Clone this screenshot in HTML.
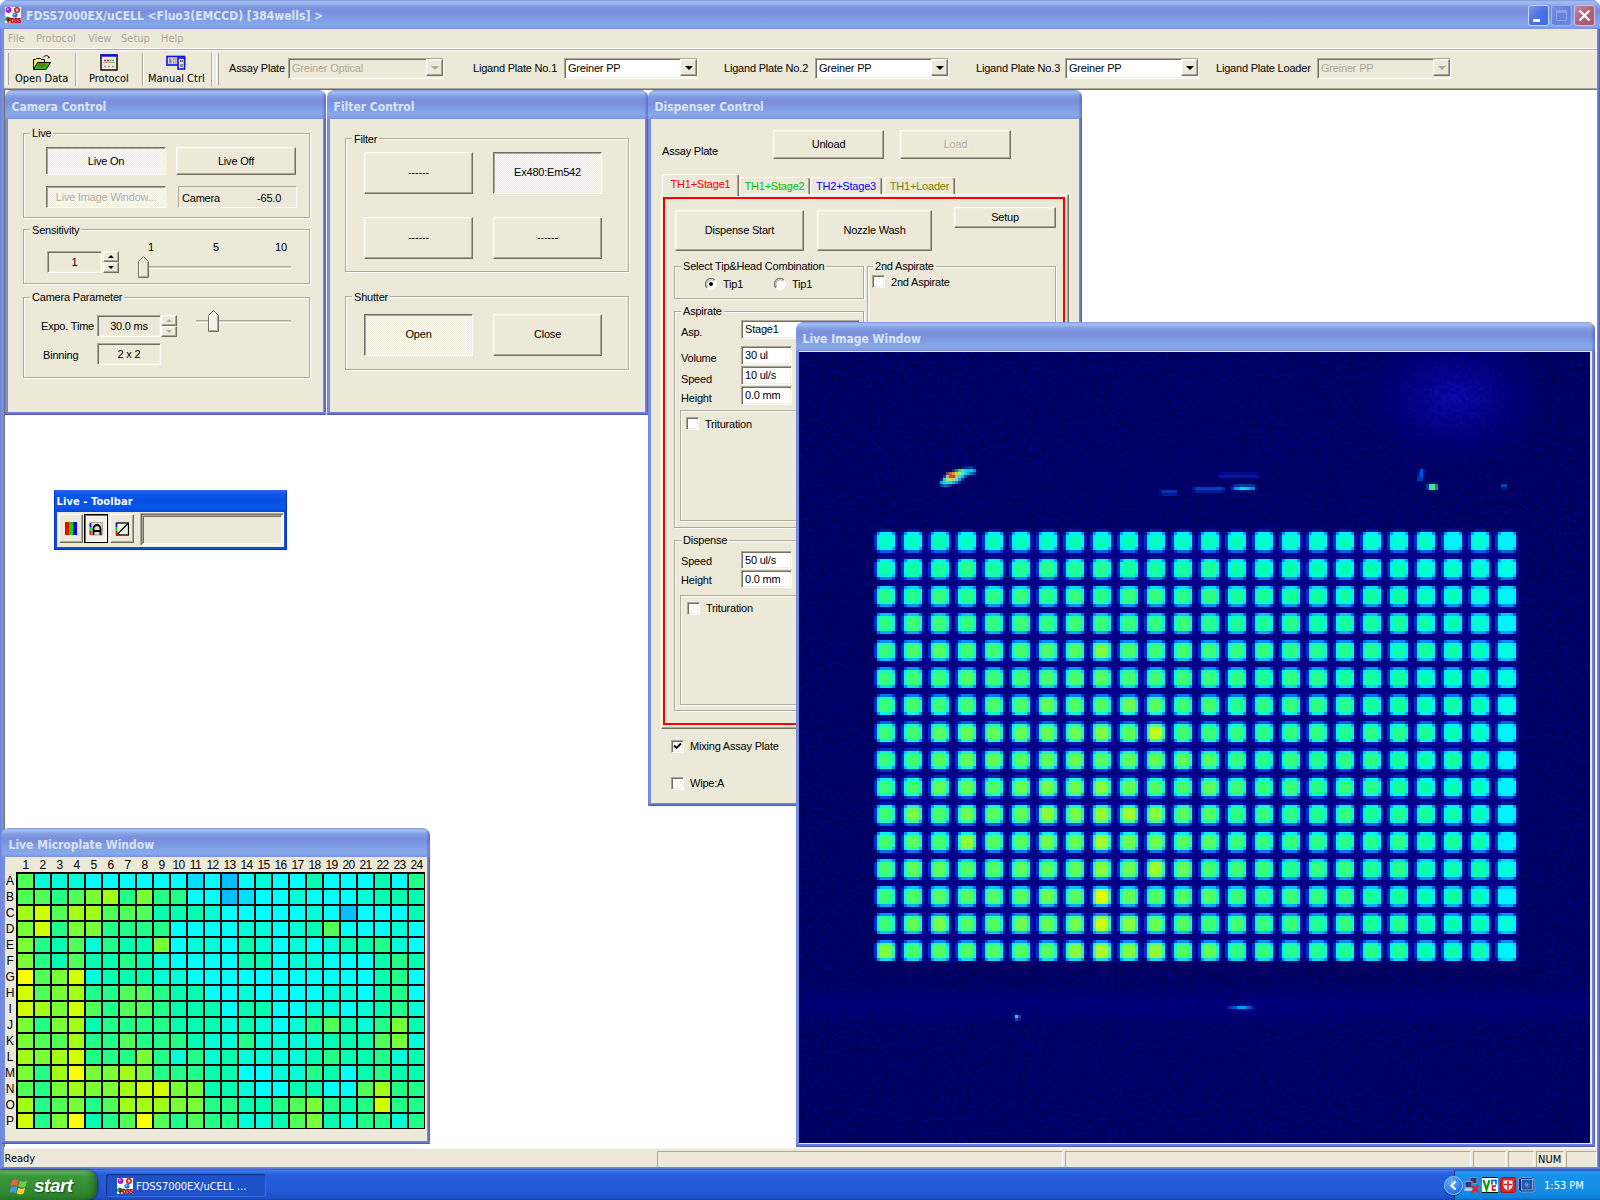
<!DOCTYPE html>
<html><head><meta charset="utf-8"><title>FDSS7000EX/uCELL</title>
<style>
*{box-sizing:border-box;margin:0;padding:0}
html,body{width:1600px;height:1200px;overflow:hidden;background:#fff}
body{position:relative;font-family:"Liberation Sans",sans-serif;font-size:11px;color:#000;letter-spacing:-0.2px}
.a{position:absolute}
.t{position:absolute;white-space:nowrap;line-height:13px;height:13px}
.tah{font-family:"DejaVu Sans Condensed","DejaVu Sans","Liberation Sans",sans-serif;font-size:11px;letter-spacing:0}
.cap{font-family:"DejaVu Sans Condensed","DejaVu Sans","Liberation Sans",sans-serif;font-weight:bold;font-size:12px;letter-spacing:0;color:#dbe4f7;position:absolute;white-space:nowrap;line-height:16px}
.face{background:#ece9d8}
/* classic raised button */
.btn{position:absolute;background:#ece9d8;border:1px solid;border-color:#fff #716f64 #716f64 #fff;box-shadow:inset -1px -1px 0 #aca899,inset 1px 1px 0 #f1efe2;text-align:center;white-space:nowrap}
.btn.dn{border-color:#716f64 #fff #fff #716f64;box-shadow:inset 1px 1px 0 #aca899,inset -1px -1px 0 #f1efe2;background:#ece9d8 conic-gradient(#fff 25%,#ece9d8 0 50%,#fff 0 75%,#ece9d8 0) 0 0/2px 2px}
.btn.dis{color:#aca899;text-shadow:1px 1px 0 #fff}
.sunk{position:absolute;border:1px solid;border-color:#aca899 #fff #fff #aca899;box-shadow:inset 1px 1px 0 #716f64,inset -1px -1px 0 #f1efe2;background:#fff;white-space:nowrap}
.sunk.f{background:#ece9d8}
.sunk1{position:absolute;border:1px solid;border-color:#aca899 #fff #fff #aca899;white-space:nowrap}
.grp{position:absolute;border:1px solid #aca899;box-shadow:1px 1px 0 #fff,inset 1px 1px 0 #fff}
.gl{position:absolute;background:#ece9d8;padding:0 2px;white-space:nowrap;line-height:13px;height:13px;margin-top:1px}
/* child window */
.win{position:absolute;background:#ece9d8;border-radius:7px 7px 0 0}
.win .tb{position:absolute;left:0;top:0;right:0;height:29px;border-radius:7px 7px 0 0;overflow:hidden;
 background:linear-gradient(180deg,#6c8ae2 0,#9db7ec 1px,#a1b9ed 3px,#839fe3 6px,#7a90dd 10px,#7b91de 14px,#80a0e5 20px,#86aaea 25px,#819fe6 27px,#7a92df 29px)}
.win .bl{position:absolute;left:0;top:29px;bottom:0;width:3px;background:linear-gradient(90deg,#6a80da,#7991e0 50%,#7288dc)}
.win .br{position:absolute;right:0;top:29px;bottom:0;width:3px;background:linear-gradient(90deg,#7c90e0,#6a78d4 50%,#4a50ba)}
.win .bb{position:absolute;left:0;right:0;bottom:0;height:3px;background:linear-gradient(180deg,#7588de,#6474d2 50%,#4a4fb8)}
.win .tb::after{content:'';position:absolute;right:0;top:3px;bottom:0;width:4px;background:linear-gradient(90deg,rgba(90,80,200,0),rgba(80,70,195,.55))}
</style></head><body>
<!-- main frame -->
<div class="a" id="frame" style="left:0;top:0;width:1600px;height:1170px;background:#7b93e0;border-radius:8px 8px 0 0"></div>
<div class="a" id="mtitle" style="left:0;top:0;width:1600px;height:29px;border-radius:8px 8px 0 0;background:linear-gradient(180deg,#6c8ae2 0,#9db7ec 1px,#a1b9ed 3px,#839fe3 6px,#7a90dd 10px,#7b91de 14px,#80a0e5 20px,#86aaea 25px,#819fe6 27px,#7a92df 29px)"></div>
<div class="a" style="left:0;top:29px;width:4px;height:1141px;background:linear-gradient(90deg,#6a80da,#7c94e2 50%,#7389dd)"></div>
<div class="a" style="left:1597px;top:29px;width:3px;height:1141px;background:linear-gradient(90deg,#7c90e0,#6a78d4 50%,#4a50ba)"></div>
<!-- app icon -->
<svg class="a" style="left:5px;top:7px" width="16" height="16" viewBox="0 0 16 16">
<rect width="16" height="16" fill="#fff"/>
<circle cx="3.5" cy="3" r="3" fill="#a020d0"/><circle cx="2.8" cy="2.2" r="1" fill="#e0a0ff"/>
<circle cx="12" cy="3" r="3" fill="#e01010"/><path d="M10.5 3h3M12 1.5v3" stroke="#fff" stroke-width="1.2"/>
<circle cx="10" cy="8" r="2.6" fill="#2080d0"/><circle cx="9.4" cy="7.3" r="0.9" fill="#a0d8ff"/>
<circle cx="2.5" cy="12" r="2.5" fill="#20b020"/>
<text x="2.500" y="15.800" font-family="Liberation Sans,sans-serif" font-weight="bold" font-size="7" textLength="13.500" lengthAdjust="spacingAndGlyphs" fill="#e00000" stroke="#900000" stroke-width="0.600">FDSS</text>
</svg>
<div class="cap" style="left:26px;top:8px;">FDSS7000EX/uCELL &lt;Fluo3(EMCCD) [384wells] &gt;</div>
<!-- caption buttons -->
<div class="a" style="left:1528px;top:5px;width:21px;height:21px;border-radius:3px;border:1px solid #c8d4f4;background:linear-gradient(135deg,#7a94ea 0,#4a70e4 50%,#3e6ee6 100%)"><div class="a" style="left:4px;top:13px;width:7px;height:3px;background:#fff"></div></div>
<div class="a" style="left:1551px;top:5px;width:21px;height:21px;border-radius:3px;border:1px solid #9bb0ec;background:linear-gradient(135deg,#7a8ee2 0,#6682de 50%,#6488e2 100%)"><div class="a" style="left:4px;top:4px;width:11px;height:11px;border:1px solid #909ee6;border-top-width:3px"></div></div>
<div class="a" style="left:1574px;top:5px;width:21px;height:21px;border-radius:3px;border:1px solid #d8c0d8;background:linear-gradient(135deg,#c088a8 0,#b46078 50%,#a85870 100%)">
<svg class="a" style="left:0;top:0" width="19" height="19" viewBox="0 0 19 19"><path d="M4.5 4.5l10 10M14.5 4.5l-10 10" stroke="#fff" stroke-width="2.2"/></svg></div>
<!-- menu -->
<div class="a face" style="left:4px;top:29px;width:1593px;height:19px"></div>
<div class="t tah" style="left:8px;top:32px;color:#aca899">File</div>
<div class="t tah" style="left:36px;top:32px;color:#aca899">Protocol</div>
<div class="t tah" style="left:88px;top:32px;color:#aca899">View</div>
<div class="t tah" style="left:121px;top:32px;color:#aca899">Setup</div>
<div class="t tah" style="left:161px;top:32px;color:#aca899">Help</div>
<div class="a" style="left:4px;top:48px;width:1593px;height:3px;background:linear-gradient(180deg,#fff 0,#fff 1px,#aca899 1px,#aca899 2px,#fff 2px)"></div>
<!-- toolbar -->
<div class="a face" style="left:4px;top:51px;width:1593px;height:37px"></div>
<div class="a" style="left:4px;top:88px;width:1593px;height:2px;background:linear-gradient(180deg,#aca899 0,#aca899 1px,#716f64 1px)"></div>
<!-- mdi client -->
<div class="a" style="left:4px;top:90px;width:1593px;height:1058px;background:#fff;border-left:1px solid #716f64"></div>
<!-- toolbar content -->
<div class="a" style="left:6px;top:53px;width:3px;height:32px;border-left:1px solid #fff;border-right:1px solid #aca899"></div>
<div class="a" style="left:75px;top:53px;width:2px;height:33px;border-left:1px solid #aca899;border-right:1px solid #fff"></div>
<div class="a" style="left:142px;top:53px;width:2px;height:33px;border-left:1px solid #aca899;border-right:1px solid #fff"></div>
<div class="a" style="left:211px;top:52px;width:2px;height:35px;border-left:1px solid #aca899;border-right:1px solid #fff"></div>
<div class="a" style="left:216px;top:53px;width:3px;height:32px;border-left:1px solid #fff;border-right:1px solid #aca899"></div>
<!-- open data icon -->
<svg class="a" style="left:32px;top:54px" width="20" height="17" viewBox="0 0 20 17">
<path d="M1.5 15.5V5.5h2l1-1h4l1 1h3v3" fill="#f0f060" stroke="#000"/>
<path d="M1.5 15.5l4-7h13l-4.500 7z" fill="#20c020" stroke="#000"/>
<path d="M6 13l2-3 2 3 2-3 2 2" stroke="#806010" stroke-width="1.6" fill="none"/>
<path d="M11 3.500c2-2.500 5-2.500 6 0" stroke="#000" fill="none"/><path d="M15.500 4.500l2-0.500-0.300-2z" fill="#000"/>
</svg>
<!-- protocol icon -->
<svg class="a" style="left:100px;top:54px" width="18" height="17" viewBox="0 0 18 17">
<rect x="1" y="1" width="16" height="15" fill="#ece9d8" stroke="#000" stroke-width="1.4"/>
<rect x="0.300" y="0.300" width="17.400" height="2.400" fill="#1010f0"/>
<path d="M4 6.500h2" stroke="#e020e0" stroke-width="1.400"/><path d="M7 6.500h2" stroke="#e02020" stroke-width="1.400"/><path d="M9.500 6.500h2" stroke="#20c020" stroke-width="1.400"/><path d="M12 6.500h2" stroke="#20c0e0" stroke-width="1.400"/>
<path d="M3 8.500h12" stroke="#aca899"/><path d="M4 12.500h2M8 12.500h2M12 12.500h2" stroke="#9a978a" stroke-width="1.600"/>
</svg>
<!-- manual ctrl icon -->
<svg class="a" style="left:166px;top:55px" width="20" height="15" viewBox="0 0 20 15">
<rect x="1" y="1.500" width="17.500" height="8.500" fill="#d8dcf0" stroke="#1010f0" stroke-width="1.600"/>
<rect x="12" y="3" width="6.500" height="11" fill="#e8e8f0" stroke="#1010f0" stroke-width="1.600"/>
<rect x="3" y="3.500" width="2.500" height="5" fill="#908c80"/><rect x="7" y="3.500" width="3.500" height="5" fill="#908c80"/>
<path d="M7 6h4M8.800 3.500v5" stroke="#ece9d8" stroke-width="0.800"/>
<rect x="14" y="5" width="1.500" height="2" fill="#e02020"/><rect x="15.500" y="5" width="1.500" height="2" fill="#20c020"/><rect x="14" y="9" width="3" height="3" fill="#908c80"/>
</svg>
<div class="t tah" style="left:15px;top:72px;">Open Data</div>
<div class="t tah" style="left:89px;top:72px;">Protocol</div>
<div class="t tah" style="left:148px;top:72px;">Manual Ctrl</div>
<!-- combos -->
<div class="t" style="left:229px;top:62px;">Assay Plate</div>
<div class="sunk f" style="left:288px;top:58px;width:156px;height:21px"><div class="t" style="left:3px;top:3px;color:#aca899">Greiner Optical</div>
 <div class="btn" style="right:0;top:0;width:17px;height:17px"></div><div class="a" style="right:4.500px;top:7px;width:0;height:0;border:4px solid transparent;border-top:4px solid #aca899;border-bottom:0"></div></div>
<div class="t" style="left:473px;top:62px;">Ligand Plate No.1</div>
<div class="sunk" style="left:564px;top:58px;width:134px;height:21px"><div class="t" style="left:3px;top:3px">Greiner PP</div>
 <div class="btn" style="right:0;top:0;width:17px;height:17px"></div><div class="a" style="right:4.500px;top:7px;width:0;height:0;border:4px solid transparent;border-top:4px solid #000;border-bottom:0"></div></div>
<div class="t" style="left:724px;top:62px;">Ligand Plate No.2</div>
<div class="sunk" style="left:815px;top:58px;width:134px;height:21px"><div class="t" style="left:3px;top:3px">Greiner PP</div>
 <div class="btn" style="right:0;top:0;width:17px;height:17px"></div><div class="a" style="right:4.500px;top:7px;width:0;height:0;border:4px solid transparent;border-top:4px solid #000;border-bottom:0"></div></div>
<div class="t" style="left:976px;top:62px;">Ligand Plate No.3</div>
<div class="sunk" style="left:1065px;top:58px;width:134px;height:21px"><div class="t" style="left:3px;top:3px">Greiner PP</div>
 <div class="btn" style="right:0;top:0;width:17px;height:17px"></div><div class="a" style="right:4.500px;top:7px;width:0;height:0;border:4px solid transparent;border-top:4px solid #000;border-bottom:0"></div></div>
<div class="t" style="left:1216px;top:62px;">Ligand Plate Loader</div>
<div class="sunk f" style="left:1317px;top:58px;width:134px;height:21px"><div class="t" style="left:3px;top:3px;color:#aca899">Greiner PP</div>
 <div class="btn" style="right:0;top:0;width:17px;height:17px"></div><div class="a" style="right:4.500px;top:7px;width:0;height:0;border:4px solid transparent;border-top:4px solid #aca899;border-bottom:0"></div></div>
<!-- Camera Control window -->
<div class="win" style="left:5px;top:90px;width:321px;height:325px">
<div class="tb"></div><div class="bl"></div><div class="br"></div><div class="bb"></div>
<div class="cap" style="left:6.500px;top:9px">Camera Control</div>
<!-- coords below are relative to window: sub 5, 90 -->
<div class="grp" style="left:18px;top:43px;width:287px;height:85px"></div><div class="gl" style="left:25px;top:36px">Live</div>
<div class="btn dn" style="left:41px;top:57px;width:120px;height:28px;line-height:26px">Live On</div>
<div class="btn" style="left:171px;top:57px;width:120px;height:28px;line-height:26px">Live Off</div>
<div class="btn dn dis" style="left:41px;top:96px;width:120px;height:22px;line-height:20px">Live Image Window...</div>
<div class="sunk1" style="left:173px;top:96px;width:119px;height:22px"><div class="t" style="left:3px;top:5px">Camera</div><div class="t" style="left:78px;top:5px">-65.0</div></div>
<div class="grp" style="left:18px;top:139px;width:287px;height:55px"></div><div class="gl" style="left:25px;top:133px">Sensitivity</div>
<div class="sunk f" style="left:42px;top:161px;width:55px;height:22px;text-align:center;line-height:21px">1</div>
<div class="btn" style="left:98px;top:161px;width:16px;height:11px"><div class="a" style="left:4px;top:3px;border:3px solid transparent;border-bottom:3px solid #000;border-top:0"></div></div>
<div class="btn" style="left:98px;top:172px;width:16px;height:11px"><div class="a" style="left:4px;top:3px;border:3px solid transparent;border-top:3px solid #000;border-bottom:0"></div></div>
<div class="t" style="left:136px;top:151px;width:20px;text-align:center">1</div>
<div class="t" style="left:201px;top:151px;width:20px;text-align:center">5</div>
<div class="t" style="left:266px;top:151px;width:20px;text-align:center">10</div>
<div class="a" style="left:140px;top:176px;width:146px;height:3px;border-top:1px solid #aca899;border-bottom:1px solid #fff;background:#d4d0c0"></div>
<svg class="a" style="left:133px;top:166px" width="11" height="22" viewBox="0 0 11 22"><path d="M0.5 21.500V5.500L5.500 0.500L10.500 5.500V21.500z" fill="#ece9d8" stroke="#716f64"/><path d="M1.500 20.500V6L5.500 1.800" stroke="#fff" fill="none"/><path d="M9.500 6V20.500H1.500" stroke="#aca899" fill="none"/></svg>
<div class="grp" style="left:18px;top:207px;width:287px;height:81px"></div><div class="gl" style="left:25px;top:200px">Camera Parameter</div>
<div class="t" style="left:36px;top:230px">Expo. Time</div>
<div class="sunk f" style="left:92px;top:225px;width:64px;height:22px;text-align:center;line-height:20px">30.0 ms</div>
<div class="btn" style="left:156px;top:225px;width:16px;height:11px"><div class="a" style="left:4px;top:3px;border:3px solid transparent;border-bottom:3px solid #aca899;border-top:0"></div></div>
<div class="btn" style="left:156px;top:236px;width:16px;height:11px"><div class="a" style="left:4px;top:3px;border:3px solid transparent;border-top:3px solid #aca899;border-bottom:0"></div></div>
<div class="a" style="left:191px;top:230px;width:95px;height:3px;border-top:1px solid #aca899;border-bottom:1px solid #fff;background:#d4d0c0"></div>
<svg class="a" style="left:203px;top:220px" width="11" height="22" viewBox="0 0 11 22"><path d="M0.5 21.500V5.500L5.500 0.500L10.500 5.500V21.500z" fill="#f4f2e8" stroke="#716f64"/><path d="M1.500 20.500V6L5.500 1.800" stroke="#fff" fill="none"/><path d="M9.500 6V20.500H1.500" stroke="#aca899" fill="none"/></svg>
<div class="t" style="left:38px;top:259px">Binning</div>
<div class="sunk f" style="left:92px;top:253px;width:64px;height:22px;text-align:center;line-height:21px">2 x 2</div>
</div>
<!-- Filter Control window: origin 327,90 -->
<div class="win" style="left:327px;top:90px;width:321px;height:325px">
<div class="tb"></div><div class="bl"></div><div class="br"></div><div class="bb"></div>
<div class="cap" style="left:6.500px;top:9px">Filter Control</div>
<div class="grp" style="left:18px;top:48px;width:284px;height:134px"></div><div class="gl" style="left:25px;top:42px">Filter</div>
<div class="btn" style="left:37px;top:62px;width:109px;height:42px;line-height:39px">------</div>
<div class="btn dn" style="left:166px;top:62px;width:109px;height:42px;line-height:39px">Ex480:Em542</div>
<div class="btn" style="left:37px;top:127px;width:109px;height:42px;line-height:39px">------</div>
<div class="btn" style="left:166px;top:127px;width:109px;height:42px;line-height:39px">------</div>
<div class="grp" style="left:18px;top:206px;width:284px;height:74px"></div><div class="gl" style="left:25px;top:200px">Shutter</div>
<div class="btn dn" style="left:37px;top:224px;width:109px;height:42px;line-height:39px">Open</div>
<div class="btn" style="left:166px;top:224px;width:109px;height:42px;line-height:39px">Close</div>
</div>
<!-- Dispenser Control window -->
<div class="win" style="left:648px;top:90px;width:434px;height:716px">
<div class="tb"></div><div class="bl"></div><div class="br"></div><div class="bb"></div>
<div class="cap" style="left:6.500px;top:9px">Dispenser Control</div>
<div class="t" style="left:14px;top:55px;">Assay Plate</div>
<div class="btn " style="left:125px;top:40px;width:111px;height:29px;line-height:26px">Unload</div>
<div class="btn dis" style="left:252px;top:40px;width:111px;height:29px;line-height:26px">Load</div>
<div class="a" style="left:13px;top:104px;width:408px;height:535px;border:1px solid;border-color:#fff #716f64 #716f64 #fff;box-shadow:inset -1px -1px 0 #aca899"></div>
<div class="a" style="left:91px;top:87px;width:71px;height:17px;background:#ece9d8;border:1px solid;border-color:#fff #716f64 transparent #fff;border-bottom:0;border-radius:3px 3px 0 0;box-shadow:inset -1px 0 0 #aca899;text-align:center;color:#00c000;line-height:17px;white-space:nowrap">TH1+Stage2</div>
<div class="a" style="left:162px;top:87px;width:72px;height:17px;background:#ece9d8;border:1px solid;border-color:#fff #716f64 transparent #fff;border-bottom:0;border-radius:3px 3px 0 0;box-shadow:inset -1px 0 0 #aca899;text-align:center;color:#0000ff;line-height:17px;white-space:nowrap">TH2+Stage3</div>
<div class="a" style="left:236px;top:87px;width:71px;height:17px;background:#ece9d8;border:1px solid;border-color:#fff #716f64 transparent #fff;border-bottom:0;border-radius:3px 3px 0 0;box-shadow:inset -1px 0 0 #aca899;text-align:center;color:#808000;line-height:17px;white-space:nowrap">TH1+Loader</div>
<div class="a" style="left:14px;top:84px;width:77px;height:22px;background:#ece9d8;border:1px solid;border-color:#fff #716f64 transparent #fff;border-bottom:0;border-radius:3px 3px 0 0;box-shadow:inset -1px 0 0 #aca899;text-align:center;color:#ff0000;line-height:19px;white-space:nowrap">TH1+Stage1</div>
<div class="a" style="left:15px;top:107px;width:402px;height:528px;border:2px solid #ff0000"></div>
<div class="btn " style="left:27px;top:120px;width:129px;height:41px;line-height:38px">Dispense Start</div>
<div class="btn " style="left:169px;top:120px;width:115px;height:41px;line-height:38px">Nozzle Wash</div>
<div class="btn " style="left:306px;top:117px;width:102px;height:21px;line-height:18px">Setup</div>
<div class="grp" style="left:26px;top:176px;width:190px;height:33px"></div>
<div class="gl" style="left:33px;top:169px">Select Tip&amp;Head Combination</div>
<svg class="a" style="left:57px;top:188px" width="12" height="12" viewBox="0 0 12 12"><circle cx="6" cy="6" r="5" fill="#fff"/><path d="M2.100 9.900A5.500 5.500 0 0 1 9.900 2.100" stroke="#716f64" stroke-width="1.200" fill="none"/><path d="M9.900 2.100A5.500 5.500 0 0 1 2.100 9.900" stroke="#fff" stroke-width="1.200" fill="none"/><path d="M2.900 9.100A4.400 4.400 0 0 1 9.100 2.900" stroke="#aca899" stroke-width="1" fill="none"/><circle cx="6" cy="6" r="2" fill="#000"/></svg>
<div class="t" style="left:75px;top:188px;">Tip1</div>
<svg class="a" style="left:126px;top:188px" width="12" height="12" viewBox="0 0 12 12"><circle cx="6" cy="6" r="5" fill="#fff"/><path d="M2.100 9.900A5.500 5.500 0 0 1 9.900 2.100" stroke="#716f64" stroke-width="1.200" fill="none"/><path d="M9.900 2.100A5.500 5.500 0 0 1 2.100 9.900" stroke="#fff" stroke-width="1.200" fill="none"/><path d="M2.900 9.100A4.400 4.400 0 0 1 9.100 2.900" stroke="#aca899" stroke-width="1" fill="none"/></svg>
<div class="t" style="left:144px;top:188px;">Tip1</div>
<div class="grp" style="left:219px;top:176px;width:189px;height:134px"></div>
<div class="gl" style="left:225px;top:169px">2nd Aspirate</div>
<div class="sunk" style="left:224px;top:185px;width:13px;height:13px"></div>
<div class="t" style="left:243px;top:186px;">2nd Aspirate</div>
<div class="grp" style="left:26px;top:221px;width:190px;height:217px"></div>
<div class="gl" style="left:33px;top:214px">Aspirate</div>
<div class="t" style="left:33px;top:236px;">Asp.</div>
<div class="sunk" style="left:93px;top:230px;width:119px;height:19px"><div class="t" style="left:3px;top:2px">Stage1</div></div>
<div class="t" style="left:33px;top:262px;">Volume</div>
<div class="sunk" style="left:93px;top:256px;width:51px;height:19px"><div class="t" style="left:3px;top:2px">30 ul</div></div>
<div class="t" style="left:33px;top:283px;">Speed</div>
<div class="sunk" style="left:93px;top:276px;width:51px;height:19px"><div class="t" style="left:3px;top:2px">10 ul/s</div></div>
<div class="t" style="left:33px;top:302px;">Height</div>
<div class="sunk" style="left:93px;top:296px;width:51px;height:19px"><div class="t" style="left:3px;top:2px">0.0 mm</div></div>
<div class="grp" style="left:32px;top:320px;width:178px;height:111px"></div>
<div class="sunk" style="left:38px;top:327px;width:13px;height:13px"></div>
<div class="t" style="left:57px;top:328px;">Trituration</div>
<div class="grp" style="left:26px;top:450px;width:190px;height:171px"></div>
<div class="gl" style="left:33px;top:443px">Dispense</div>
<div class="t" style="left:33px;top:465px;">Speed</div>
<div class="sunk" style="left:93px;top:461px;width:51px;height:18px"><div class="t" style="left:3px;top:2px">50 ul/s</div></div>
<div class="t" style="left:33px;top:484px;">Height</div>
<div class="sunk" style="left:93px;top:480px;width:51px;height:18px"><div class="t" style="left:3px;top:2px">0.0 mm</div></div>
<div class="grp" style="left:32px;top:505px;width:178px;height:110px"></div>
<div class="sunk" style="left:39px;top:512px;width:13px;height:13px"></div>
<div class="t" style="left:58px;top:512px;">Trituration</div>
<div class="sunk" style="left:23px;top:650px;width:13px;height:13px"><svg class="a" style="left:1px;top:1px" width="9" height="9" viewBox="0 0 9 9"><path d="M1 3.500L3.500 6L8 1.500" stroke="#000" stroke-width="1.800" fill="none"/></svg></div>
<div class="t" style="left:42px;top:650px;">Mixing Assay Plate</div>
<div class="sunk" style="left:23px;top:687px;width:13px;height:13px"></div>
<div class="t" style="left:42px;top:687px;">Wipe:A</div>
</div>
<!-- Live Microplate Window -->
<div class="win" style="left:2px;top:828px;width:428px;height:316px">
<div class="tb"></div><div class="bl"></div><div class="br"></div><div class="bb"></div>
<div class="cap" style="left:6.500px;top:9px">Live Microplate Window</div>
<div class="t" style="left:13.5px;top:31px;width:20px;text-align:center;font-size:12px;letter-spacing:-0.6px">1</div>
<div class="t" style="left:30.5px;top:31px;width:20px;text-align:center;font-size:12px;letter-spacing:-0.6px">2</div>
<div class="t" style="left:47.5px;top:31px;width:20px;text-align:center;font-size:12px;letter-spacing:-0.6px">3</div>
<div class="t" style="left:64.5px;top:31px;width:20px;text-align:center;font-size:12px;letter-spacing:-0.6px">4</div>
<div class="t" style="left:81.5px;top:31px;width:20px;text-align:center;font-size:12px;letter-spacing:-0.6px">5</div>
<div class="t" style="left:98.5px;top:31px;width:20px;text-align:center;font-size:12px;letter-spacing:-0.6px">6</div>
<div class="t" style="left:115.5px;top:31px;width:20px;text-align:center;font-size:12px;letter-spacing:-0.6px">7</div>
<div class="t" style="left:132.5px;top:31px;width:20px;text-align:center;font-size:12px;letter-spacing:-0.6px">8</div>
<div class="t" style="left:149.5px;top:31px;width:20px;text-align:center;font-size:12px;letter-spacing:-0.6px">9</div>
<div class="t" style="left:166.5px;top:31px;width:20px;text-align:center;font-size:12px;letter-spacing:-0.6px">10</div>
<div class="t" style="left:183.5px;top:31px;width:20px;text-align:center;font-size:12px;letter-spacing:-0.6px">11</div>
<div class="t" style="left:200.5px;top:31px;width:20px;text-align:center;font-size:12px;letter-spacing:-0.6px">12</div>
<div class="t" style="left:217.5px;top:31px;width:20px;text-align:center;font-size:12px;letter-spacing:-0.6px">13</div>
<div class="t" style="left:234.5px;top:31px;width:20px;text-align:center;font-size:12px;letter-spacing:-0.6px">14</div>
<div class="t" style="left:251.5px;top:31px;width:20px;text-align:center;font-size:12px;letter-spacing:-0.6px">15</div>
<div class="t" style="left:268.5px;top:31px;width:20px;text-align:center;font-size:12px;letter-spacing:-0.6px">16</div>
<div class="t" style="left:285.5px;top:31px;width:20px;text-align:center;font-size:12px;letter-spacing:-0.6px">17</div>
<div class="t" style="left:302.5px;top:31px;width:20px;text-align:center;font-size:12px;letter-spacing:-0.6px">18</div>
<div class="t" style="left:319.5px;top:31px;width:20px;text-align:center;font-size:12px;letter-spacing:-0.6px">19</div>
<div class="t" style="left:336.5px;top:31px;width:20px;text-align:center;font-size:12px;letter-spacing:-0.6px">20</div>
<div class="t" style="left:353.5px;top:31px;width:20px;text-align:center;font-size:12px;letter-spacing:-0.6px">21</div>
<div class="t" style="left:370.5px;top:31px;width:20px;text-align:center;font-size:12px;letter-spacing:-0.6px">22</div>
<div class="t" style="left:387.5px;top:31px;width:20px;text-align:center;font-size:12px;letter-spacing:-0.6px">23</div>
<div class="t" style="left:404.5px;top:31px;width:20px;text-align:center;font-size:12px;letter-spacing:-0.6px">24</div>
<div class="t" style="left:3px;top:47px;width:10px;text-align:center;font-size:12px">A</div>
<div class="t" style="left:3px;top:63px;width:10px;text-align:center;font-size:12px">B</div>
<div class="t" style="left:3px;top:79px;width:10px;text-align:center;font-size:12px">C</div>
<div class="t" style="left:3px;top:95px;width:10px;text-align:center;font-size:12px">D</div>
<div class="t" style="left:3px;top:111px;width:10px;text-align:center;font-size:12px">E</div>
<div class="t" style="left:3px;top:127px;width:10px;text-align:center;font-size:12px">F</div>
<div class="t" style="left:3px;top:143px;width:10px;text-align:center;font-size:12px">G</div>
<div class="t" style="left:3px;top:159px;width:10px;text-align:center;font-size:12px">H</div>
<div class="t" style="left:3px;top:175px;width:10px;text-align:center;font-size:12px">I</div>
<div class="t" style="left:3px;top:191px;width:10px;text-align:center;font-size:12px">J</div>
<div class="t" style="left:3px;top:207px;width:10px;text-align:center;font-size:12px">K</div>
<div class="t" style="left:3px;top:223px;width:10px;text-align:center;font-size:12px">L</div>
<div class="t" style="left:3px;top:239px;width:10px;text-align:center;font-size:12px">M</div>
<div class="t" style="left:3px;top:255px;width:10px;text-align:center;font-size:12px">N</div>
<div class="t" style="left:3px;top:271px;width:10px;text-align:center;font-size:12px">O</div>
<div class="t" style="left:3px;top:287px;width:10px;text-align:center;font-size:12px">P</div>
<svg class="a" style="left:14px;top:44px" width="409" height="257" viewBox="0 0 409 257" shape-rendering="crispEdges"><rect width="409" height="257" fill="#000"/>
<rect x="2" y="2" width="15" height="14" fill="#50ff58"/>
<rect x="19" y="2" width="15" height="14" fill="#00ffd8"/>
<rect x="36" y="2" width="15" height="14" fill="#00ffd8"/>
<rect x="53" y="2" width="15" height="14" fill="#00ffd8"/>
<rect x="70" y="2" width="15" height="14" fill="#00ffff"/>
<rect x="87" y="2" width="15" height="14" fill="#00ffff"/>
<rect x="104" y="2" width="15" height="14" fill="#00ffff"/>
<rect x="121" y="2" width="15" height="14" fill="#00ffff"/>
<rect x="138" y="2" width="15" height="14" fill="#00ffff"/>
<rect x="155" y="2" width="15" height="14" fill="#00ffff"/>
<rect x="172" y="2" width="15" height="14" fill="#00e0ff"/>
<rect x="189" y="2" width="15" height="14" fill="#00ffff"/>
<rect x="206" y="2" width="15" height="14" fill="#00c0ff"/>
<rect x="223" y="2" width="15" height="14" fill="#00ffff"/>
<rect x="240" y="2" width="15" height="14" fill="#00ffd8"/>
<rect x="257" y="2" width="15" height="14" fill="#00ffff"/>
<rect x="274" y="2" width="15" height="14" fill="#00ffff"/>
<rect x="291" y="2" width="15" height="14" fill="#00ffb0"/>
<rect x="308" y="2" width="15" height="14" fill="#00ffff"/>
<rect x="325" y="2" width="15" height="14" fill="#00ffff"/>
<rect x="342" y="2" width="15" height="14" fill="#00ffff"/>
<rect x="359" y="2" width="15" height="14" fill="#00ffb0"/>
<rect x="376" y="2" width="15" height="14" fill="#00ffff"/>
<rect x="393" y="2" width="15" height="14" fill="#20ff88"/>
<rect x="2" y="18" width="15" height="14" fill="#50ff58"/>
<rect x="19" y="18" width="15" height="14" fill="#50ff58"/>
<rect x="36" y="18" width="15" height="14" fill="#20ff88"/>
<rect x="53" y="18" width="15" height="14" fill="#50ff58"/>
<rect x="70" y="18" width="15" height="14" fill="#78ff38"/>
<rect x="87" y="18" width="15" height="14" fill="#a0ff14"/>
<rect x="104" y="18" width="15" height="14" fill="#20ff88"/>
<rect x="121" y="18" width="15" height="14" fill="#78ff38"/>
<rect x="138" y="18" width="15" height="14" fill="#20ff88"/>
<rect x="155" y="18" width="15" height="14" fill="#20ff88"/>
<rect x="172" y="18" width="15" height="14" fill="#00ffff"/>
<rect x="189" y="18" width="15" height="14" fill="#00ffff"/>
<rect x="206" y="18" width="15" height="14" fill="#00c0ff"/>
<rect x="223" y="18" width="15" height="14" fill="#00e0ff"/>
<rect x="240" y="18" width="15" height="14" fill="#00ffff"/>
<rect x="257" y="18" width="15" height="14" fill="#00ffff"/>
<rect x="274" y="18" width="15" height="14" fill="#00ffd8"/>
<rect x="291" y="18" width="15" height="14" fill="#00ffff"/>
<rect x="308" y="18" width="15" height="14" fill="#00ffff"/>
<rect x="325" y="18" width="15" height="14" fill="#00ffff"/>
<rect x="342" y="18" width="15" height="14" fill="#00ffd8"/>
<rect x="359" y="18" width="15" height="14" fill="#00ffb0"/>
<rect x="376" y="18" width="15" height="14" fill="#00ffb0"/>
<rect x="393" y="18" width="15" height="14" fill="#00ffb0"/>
<rect x="2" y="34" width="15" height="14" fill="#a0ff14"/>
<rect x="19" y="34" width="15" height="14" fill="#d0ff00"/>
<rect x="36" y="34" width="15" height="14" fill="#50ff58"/>
<rect x="53" y="34" width="15" height="14" fill="#a0ff14"/>
<rect x="70" y="34" width="15" height="14" fill="#a0ff14"/>
<rect x="87" y="34" width="15" height="14" fill="#50ff58"/>
<rect x="104" y="34" width="15" height="14" fill="#50ff58"/>
<rect x="121" y="34" width="15" height="14" fill="#50ff58"/>
<rect x="138" y="34" width="15" height="14" fill="#00ffb0"/>
<rect x="155" y="34" width="15" height="14" fill="#00ffb0"/>
<rect x="172" y="34" width="15" height="14" fill="#00ffb0"/>
<rect x="189" y="34" width="15" height="14" fill="#00ffd8"/>
<rect x="206" y="34" width="15" height="14" fill="#00ffff"/>
<rect x="223" y="34" width="15" height="14" fill="#00ffff"/>
<rect x="240" y="34" width="15" height="14" fill="#00ffff"/>
<rect x="257" y="34" width="15" height="14" fill="#00ffff"/>
<rect x="274" y="34" width="15" height="14" fill="#00ffff"/>
<rect x="291" y="34" width="15" height="14" fill="#00ffd8"/>
<rect x="308" y="34" width="15" height="14" fill="#00ffff"/>
<rect x="325" y="34" width="15" height="14" fill="#00c0ff"/>
<rect x="342" y="34" width="15" height="14" fill="#00ffff"/>
<rect x="359" y="34" width="15" height="14" fill="#00ffff"/>
<rect x="376" y="34" width="15" height="14" fill="#00ffff"/>
<rect x="393" y="34" width="15" height="14" fill="#00ffb0"/>
<rect x="2" y="50" width="15" height="14" fill="#78ff38"/>
<rect x="19" y="50" width="15" height="14" fill="#d0ff00"/>
<rect x="36" y="50" width="15" height="14" fill="#20ff88"/>
<rect x="53" y="50" width="15" height="14" fill="#78ff38"/>
<rect x="70" y="50" width="15" height="14" fill="#78ff38"/>
<rect x="87" y="50" width="15" height="14" fill="#20ff88"/>
<rect x="104" y="50" width="15" height="14" fill="#20ff88"/>
<rect x="121" y="50" width="15" height="14" fill="#20ff88"/>
<rect x="138" y="50" width="15" height="14" fill="#20ff88"/>
<rect x="155" y="50" width="15" height="14" fill="#00ffff"/>
<rect x="172" y="50" width="15" height="14" fill="#00ffff"/>
<rect x="189" y="50" width="15" height="14" fill="#00ffff"/>
<rect x="206" y="50" width="15" height="14" fill="#00ffff"/>
<rect x="223" y="50" width="15" height="14" fill="#00ffd8"/>
<rect x="240" y="50" width="15" height="14" fill="#00ffd8"/>
<rect x="257" y="50" width="15" height="14" fill="#00ffff"/>
<rect x="274" y="50" width="15" height="14" fill="#00ffd8"/>
<rect x="291" y="50" width="15" height="14" fill="#00ffb0"/>
<rect x="308" y="50" width="15" height="14" fill="#50ff58"/>
<rect x="325" y="50" width="15" height="14" fill="#00ffff"/>
<rect x="342" y="50" width="15" height="14" fill="#00ffff"/>
<rect x="359" y="50" width="15" height="14" fill="#00ffff"/>
<rect x="376" y="50" width="15" height="14" fill="#00ffd8"/>
<rect x="393" y="50" width="15" height="14" fill="#00ffff"/>
<rect x="2" y="66" width="15" height="14" fill="#78ff38"/>
<rect x="19" y="66" width="15" height="14" fill="#20ff88"/>
<rect x="36" y="66" width="15" height="14" fill="#00ffb0"/>
<rect x="53" y="66" width="15" height="14" fill="#50ff58"/>
<rect x="70" y="66" width="15" height="14" fill="#00ffd8"/>
<rect x="87" y="66" width="15" height="14" fill="#20ff88"/>
<rect x="104" y="66" width="15" height="14" fill="#00ffb0"/>
<rect x="121" y="66" width="15" height="14" fill="#00ffb0"/>
<rect x="138" y="66" width="15" height="14" fill="#78ff38"/>
<rect x="155" y="66" width="15" height="14" fill="#00ffff"/>
<rect x="172" y="66" width="15" height="14" fill="#00ffd8"/>
<rect x="189" y="66" width="15" height="14" fill="#00ffd8"/>
<rect x="206" y="66" width="15" height="14" fill="#00ffff"/>
<rect x="223" y="66" width="15" height="14" fill="#00ffb0"/>
<rect x="240" y="66" width="15" height="14" fill="#00ffd8"/>
<rect x="257" y="66" width="15" height="14" fill="#00ffff"/>
<rect x="274" y="66" width="15" height="14" fill="#00ffd8"/>
<rect x="291" y="66" width="15" height="14" fill="#00ffff"/>
<rect x="308" y="66" width="15" height="14" fill="#00ffd8"/>
<rect x="325" y="66" width="15" height="14" fill="#00ffb0"/>
<rect x="342" y="66" width="15" height="14" fill="#00ffb0"/>
<rect x="359" y="66" width="15" height="14" fill="#20ff88"/>
<rect x="376" y="66" width="15" height="14" fill="#00ffd8"/>
<rect x="393" y="66" width="15" height="14" fill="#00ffff"/>
<rect x="2" y="82" width="15" height="14" fill="#78ff38"/>
<rect x="19" y="82" width="15" height="14" fill="#20ff88"/>
<rect x="36" y="82" width="15" height="14" fill="#00ffb0"/>
<rect x="53" y="82" width="15" height="14" fill="#50ff58"/>
<rect x="70" y="82" width="15" height="14" fill="#00ffb0"/>
<rect x="87" y="82" width="15" height="14" fill="#00ffb0"/>
<rect x="104" y="82" width="15" height="14" fill="#20ff88"/>
<rect x="121" y="82" width="15" height="14" fill="#00ffb0"/>
<rect x="138" y="82" width="15" height="14" fill="#00ffd8"/>
<rect x="155" y="82" width="15" height="14" fill="#00ffff"/>
<rect x="172" y="82" width="15" height="14" fill="#00ffff"/>
<rect x="189" y="82" width="15" height="14" fill="#00ffff"/>
<rect x="206" y="82" width="15" height="14" fill="#00ffff"/>
<rect x="223" y="82" width="15" height="14" fill="#00ffb0"/>
<rect x="240" y="82" width="15" height="14" fill="#00ffb0"/>
<rect x="257" y="82" width="15" height="14" fill="#00ffff"/>
<rect x="274" y="82" width="15" height="14" fill="#00ffd8"/>
<rect x="291" y="82" width="15" height="14" fill="#00ffd8"/>
<rect x="308" y="82" width="15" height="14" fill="#00ffff"/>
<rect x="325" y="82" width="15" height="14" fill="#00ffff"/>
<rect x="342" y="82" width="15" height="14" fill="#00ffff"/>
<rect x="359" y="82" width="15" height="14" fill="#00ffb0"/>
<rect x="376" y="82" width="15" height="14" fill="#20ff88"/>
<rect x="393" y="82" width="15" height="14" fill="#00ffb0"/>
<rect x="2" y="98" width="15" height="14" fill="#f8ff00"/>
<rect x="19" y="98" width="15" height="14" fill="#50ff58"/>
<rect x="36" y="98" width="15" height="14" fill="#78ff38"/>
<rect x="53" y="98" width="15" height="14" fill="#d0ff00"/>
<rect x="70" y="98" width="15" height="14" fill="#00ffd8"/>
<rect x="87" y="98" width="15" height="14" fill="#00ffb0"/>
<rect x="104" y="98" width="15" height="14" fill="#00ffb0"/>
<rect x="121" y="98" width="15" height="14" fill="#00ffb0"/>
<rect x="138" y="98" width="15" height="14" fill="#00ffd8"/>
<rect x="155" y="98" width="15" height="14" fill="#00ffd8"/>
<rect x="172" y="98" width="15" height="14" fill="#00ffff"/>
<rect x="189" y="98" width="15" height="14" fill="#00ffff"/>
<rect x="206" y="98" width="15" height="14" fill="#00ffff"/>
<rect x="223" y="98" width="15" height="14" fill="#00ffff"/>
<rect x="240" y="98" width="15" height="14" fill="#00ffff"/>
<rect x="257" y="98" width="15" height="14" fill="#00ffff"/>
<rect x="274" y="98" width="15" height="14" fill="#00ffff"/>
<rect x="291" y="98" width="15" height="14" fill="#00ffff"/>
<rect x="308" y="98" width="15" height="14" fill="#00ffff"/>
<rect x="325" y="98" width="15" height="14" fill="#00ffff"/>
<rect x="342" y="98" width="15" height="14" fill="#00ffff"/>
<rect x="359" y="98" width="15" height="14" fill="#00ffb0"/>
<rect x="376" y="98" width="15" height="14" fill="#20ff88"/>
<rect x="393" y="98" width="15" height="14" fill="#00ffff"/>
<rect x="2" y="114" width="15" height="14" fill="#d0ff00"/>
<rect x="19" y="114" width="15" height="14" fill="#50ff58"/>
<rect x="36" y="114" width="15" height="14" fill="#78ff38"/>
<rect x="53" y="114" width="15" height="14" fill="#a0ff14"/>
<rect x="70" y="114" width="15" height="14" fill="#20ff88"/>
<rect x="87" y="114" width="15" height="14" fill="#20ff88"/>
<rect x="104" y="114" width="15" height="14" fill="#50ff58"/>
<rect x="121" y="114" width="15" height="14" fill="#50ff58"/>
<rect x="138" y="114" width="15" height="14" fill="#20ff88"/>
<rect x="155" y="114" width="15" height="14" fill="#00ffb0"/>
<rect x="172" y="114" width="15" height="14" fill="#00ffb0"/>
<rect x="189" y="114" width="15" height="14" fill="#00ffff"/>
<rect x="206" y="114" width="15" height="14" fill="#00ffff"/>
<rect x="223" y="114" width="15" height="14" fill="#00ffd8"/>
<rect x="240" y="114" width="15" height="14" fill="#00ffff"/>
<rect x="257" y="114" width="15" height="14" fill="#00ffff"/>
<rect x="274" y="114" width="15" height="14" fill="#00ffff"/>
<rect x="291" y="114" width="15" height="14" fill="#00ffff"/>
<rect x="308" y="114" width="15" height="14" fill="#00ffd8"/>
<rect x="325" y="114" width="15" height="14" fill="#00ffd8"/>
<rect x="342" y="114" width="15" height="14" fill="#00ffff"/>
<rect x="359" y="114" width="15" height="14" fill="#00ffb0"/>
<rect x="376" y="114" width="15" height="14" fill="#20ff88"/>
<rect x="393" y="114" width="15" height="14" fill="#00ffff"/>
<rect x="2" y="130" width="15" height="14" fill="#d0ff00"/>
<rect x="19" y="130" width="15" height="14" fill="#a0ff14"/>
<rect x="36" y="130" width="15" height="14" fill="#78ff38"/>
<rect x="53" y="130" width="15" height="14" fill="#d0ff00"/>
<rect x="70" y="130" width="15" height="14" fill="#50ff58"/>
<rect x="87" y="130" width="15" height="14" fill="#20ff88"/>
<rect x="104" y="130" width="15" height="14" fill="#50ff58"/>
<rect x="121" y="130" width="15" height="14" fill="#50ff58"/>
<rect x="138" y="130" width="15" height="14" fill="#20ff88"/>
<rect x="155" y="130" width="15" height="14" fill="#00ffb0"/>
<rect x="172" y="130" width="15" height="14" fill="#00ffb0"/>
<rect x="189" y="130" width="15" height="14" fill="#00ffb0"/>
<rect x="206" y="130" width="15" height="14" fill="#00ffff"/>
<rect x="223" y="130" width="15" height="14" fill="#00ffb0"/>
<rect x="240" y="130" width="15" height="14" fill="#00ffb0"/>
<rect x="257" y="130" width="15" height="14" fill="#00ffff"/>
<rect x="274" y="130" width="15" height="14" fill="#00ffff"/>
<rect x="291" y="130" width="15" height="14" fill="#00ffd8"/>
<rect x="308" y="130" width="15" height="14" fill="#00ffd8"/>
<rect x="325" y="130" width="15" height="14" fill="#00ffff"/>
<rect x="342" y="130" width="15" height="14" fill="#00ffd8"/>
<rect x="359" y="130" width="15" height="14" fill="#00ffb0"/>
<rect x="376" y="130" width="15" height="14" fill="#20ff88"/>
<rect x="393" y="130" width="15" height="14" fill="#00ffd8"/>
<rect x="2" y="146" width="15" height="14" fill="#78ff38"/>
<rect x="19" y="146" width="15" height="14" fill="#20ff88"/>
<rect x="36" y="146" width="15" height="14" fill="#78ff38"/>
<rect x="53" y="146" width="15" height="14" fill="#a0ff14"/>
<rect x="70" y="146" width="15" height="14" fill="#00ffb0"/>
<rect x="87" y="146" width="15" height="14" fill="#20ff88"/>
<rect x="104" y="146" width="15" height="14" fill="#20ff88"/>
<rect x="121" y="146" width="15" height="14" fill="#20ff88"/>
<rect x="138" y="146" width="15" height="14" fill="#20ff88"/>
<rect x="155" y="146" width="15" height="14" fill="#00ffb0"/>
<rect x="172" y="146" width="15" height="14" fill="#00ffb0"/>
<rect x="189" y="146" width="15" height="14" fill="#00ffb0"/>
<rect x="206" y="146" width="15" height="14" fill="#00ffd8"/>
<rect x="223" y="146" width="15" height="14" fill="#00ffb0"/>
<rect x="240" y="146" width="15" height="14" fill="#00ffd8"/>
<rect x="257" y="146" width="15" height="14" fill="#00ffff"/>
<rect x="274" y="146" width="15" height="14" fill="#00ffd8"/>
<rect x="291" y="146" width="15" height="14" fill="#20ff88"/>
<rect x="308" y="146" width="15" height="14" fill="#50ff58"/>
<rect x="325" y="146" width="15" height="14" fill="#00ffb0"/>
<rect x="342" y="146" width="15" height="14" fill="#00ffd8"/>
<rect x="359" y="146" width="15" height="14" fill="#20ff88"/>
<rect x="376" y="146" width="15" height="14" fill="#78ff38"/>
<rect x="393" y="146" width="15" height="14" fill="#00ffb0"/>
<rect x="2" y="162" width="15" height="14" fill="#78ff38"/>
<rect x="19" y="162" width="15" height="14" fill="#50ff58"/>
<rect x="36" y="162" width="15" height="14" fill="#50ff58"/>
<rect x="53" y="162" width="15" height="14" fill="#a0ff14"/>
<rect x="70" y="162" width="15" height="14" fill="#20ff88"/>
<rect x="87" y="162" width="15" height="14" fill="#20ff88"/>
<rect x="104" y="162" width="15" height="14" fill="#50ff58"/>
<rect x="121" y="162" width="15" height="14" fill="#20ff88"/>
<rect x="138" y="162" width="15" height="14" fill="#20ff88"/>
<rect x="155" y="162" width="15" height="14" fill="#20ff88"/>
<rect x="172" y="162" width="15" height="14" fill="#00ffb0"/>
<rect x="189" y="162" width="15" height="14" fill="#00ffd8"/>
<rect x="206" y="162" width="15" height="14" fill="#00ffd8"/>
<rect x="223" y="162" width="15" height="14" fill="#20ff88"/>
<rect x="240" y="162" width="15" height="14" fill="#00ffd8"/>
<rect x="257" y="162" width="15" height="14" fill="#00ffd8"/>
<rect x="274" y="162" width="15" height="14" fill="#00ffd8"/>
<rect x="291" y="162" width="15" height="14" fill="#00ffd8"/>
<rect x="308" y="162" width="15" height="14" fill="#00ffb0"/>
<rect x="325" y="162" width="15" height="14" fill="#00ffb0"/>
<rect x="342" y="162" width="15" height="14" fill="#00ffb0"/>
<rect x="359" y="162" width="15" height="14" fill="#50ff58"/>
<rect x="376" y="162" width="15" height="14" fill="#78ff38"/>
<rect x="393" y="162" width="15" height="14" fill="#00ffd8"/>
<rect x="2" y="178" width="15" height="14" fill="#a0ff14"/>
<rect x="19" y="178" width="15" height="14" fill="#78ff38"/>
<rect x="36" y="178" width="15" height="14" fill="#a0ff14"/>
<rect x="53" y="178" width="15" height="14" fill="#d0ff00"/>
<rect x="70" y="178" width="15" height="14" fill="#20ff88"/>
<rect x="87" y="178" width="15" height="14" fill="#20ff88"/>
<rect x="104" y="178" width="15" height="14" fill="#20ff88"/>
<rect x="121" y="178" width="15" height="14" fill="#78ff38"/>
<rect x="138" y="178" width="15" height="14" fill="#20ff88"/>
<rect x="155" y="178" width="15" height="14" fill="#00ffd8"/>
<rect x="172" y="178" width="15" height="14" fill="#20ff88"/>
<rect x="189" y="178" width="15" height="14" fill="#00ffd8"/>
<rect x="206" y="178" width="15" height="14" fill="#00ffb0"/>
<rect x="223" y="178" width="15" height="14" fill="#00ffd8"/>
<rect x="240" y="178" width="15" height="14" fill="#00ffd8"/>
<rect x="257" y="178" width="15" height="14" fill="#00ffd8"/>
<rect x="274" y="178" width="15" height="14" fill="#00ffd8"/>
<rect x="291" y="178" width="15" height="14" fill="#00ffb0"/>
<rect x="308" y="178" width="15" height="14" fill="#20ff88"/>
<rect x="325" y="178" width="15" height="14" fill="#00ffb0"/>
<rect x="342" y="178" width="15" height="14" fill="#00ffb0"/>
<rect x="359" y="178" width="15" height="14" fill="#20ff88"/>
<rect x="376" y="178" width="15" height="14" fill="#00ffd8"/>
<rect x="393" y="178" width="15" height="14" fill="#00ffb0"/>
<rect x="2" y="194" width="15" height="14" fill="#78ff38"/>
<rect x="19" y="194" width="15" height="14" fill="#20ff88"/>
<rect x="36" y="194" width="15" height="14" fill="#a0ff14"/>
<rect x="53" y="194" width="15" height="14" fill="#f8ff00"/>
<rect x="70" y="194" width="15" height="14" fill="#78ff38"/>
<rect x="87" y="194" width="15" height="14" fill="#78ff38"/>
<rect x="104" y="194" width="15" height="14" fill="#a0ff14"/>
<rect x="121" y="194" width="15" height="14" fill="#78ff38"/>
<rect x="138" y="194" width="15" height="14" fill="#20ff88"/>
<rect x="155" y="194" width="15" height="14" fill="#20ff88"/>
<rect x="172" y="194" width="15" height="14" fill="#20ff88"/>
<rect x="189" y="194" width="15" height="14" fill="#00ffb0"/>
<rect x="206" y="194" width="15" height="14" fill="#00ffb0"/>
<rect x="223" y="194" width="15" height="14" fill="#00ffff"/>
<rect x="240" y="194" width="15" height="14" fill="#00ffff"/>
<rect x="257" y="194" width="15" height="14" fill="#00ffd8"/>
<rect x="274" y="194" width="15" height="14" fill="#00ffd8"/>
<rect x="291" y="194" width="15" height="14" fill="#20ff88"/>
<rect x="308" y="194" width="15" height="14" fill="#00ffb0"/>
<rect x="325" y="194" width="15" height="14" fill="#00ffff"/>
<rect x="342" y="194" width="15" height="14" fill="#00ffb0"/>
<rect x="359" y="194" width="15" height="14" fill="#20ff88"/>
<rect x="376" y="194" width="15" height="14" fill="#00ffb0"/>
<rect x="393" y="194" width="15" height="14" fill="#00ffb0"/>
<rect x="2" y="210" width="15" height="14" fill="#50ff58"/>
<rect x="19" y="210" width="15" height="14" fill="#20ff88"/>
<rect x="36" y="210" width="15" height="14" fill="#78ff38"/>
<rect x="53" y="210" width="15" height="14" fill="#a0ff14"/>
<rect x="70" y="210" width="15" height="14" fill="#78ff38"/>
<rect x="87" y="210" width="15" height="14" fill="#78ff38"/>
<rect x="104" y="210" width="15" height="14" fill="#a0ff14"/>
<rect x="121" y="210" width="15" height="14" fill="#d0ff00"/>
<rect x="138" y="210" width="15" height="14" fill="#d0ff00"/>
<rect x="155" y="210" width="15" height="14" fill="#78ff38"/>
<rect x="172" y="210" width="15" height="14" fill="#78ff38"/>
<rect x="189" y="210" width="15" height="14" fill="#00ffb0"/>
<rect x="206" y="210" width="15" height="14" fill="#00ffb0"/>
<rect x="223" y="210" width="15" height="14" fill="#00ffd8"/>
<rect x="240" y="210" width="15" height="14" fill="#00ffff"/>
<rect x="257" y="210" width="15" height="14" fill="#00ffff"/>
<rect x="274" y="210" width="15" height="14" fill="#00ffb0"/>
<rect x="291" y="210" width="15" height="14" fill="#00ffb0"/>
<rect x="308" y="210" width="15" height="14" fill="#00ffff"/>
<rect x="325" y="210" width="15" height="14" fill="#00ffff"/>
<rect x="342" y="210" width="15" height="14" fill="#50ff58"/>
<rect x="359" y="210" width="15" height="14" fill="#a0ff14"/>
<rect x="376" y="210" width="15" height="14" fill="#20ff88"/>
<rect x="393" y="210" width="15" height="14" fill="#20ff88"/>
<rect x="2" y="226" width="15" height="14" fill="#a0ff14"/>
<rect x="19" y="226" width="15" height="14" fill="#20ff88"/>
<rect x="36" y="226" width="15" height="14" fill="#50ff58"/>
<rect x="53" y="226" width="15" height="14" fill="#78ff38"/>
<rect x="70" y="226" width="15" height="14" fill="#20ff88"/>
<rect x="87" y="226" width="15" height="14" fill="#50ff58"/>
<rect x="104" y="226" width="15" height="14" fill="#a0ff14"/>
<rect x="121" y="226" width="15" height="14" fill="#a0ff14"/>
<rect x="138" y="226" width="15" height="14" fill="#a0ff14"/>
<rect x="155" y="226" width="15" height="14" fill="#78ff38"/>
<rect x="172" y="226" width="15" height="14" fill="#78ff38"/>
<rect x="189" y="226" width="15" height="14" fill="#20ff88"/>
<rect x="206" y="226" width="15" height="14" fill="#20ff88"/>
<rect x="223" y="226" width="15" height="14" fill="#00ffb0"/>
<rect x="240" y="226" width="15" height="14" fill="#00ffb0"/>
<rect x="257" y="226" width="15" height="14" fill="#20ff88"/>
<rect x="274" y="226" width="15" height="14" fill="#50ff58"/>
<rect x="291" y="226" width="15" height="14" fill="#78ff38"/>
<rect x="308" y="226" width="15" height="14" fill="#20ff88"/>
<rect x="325" y="226" width="15" height="14" fill="#00ffb0"/>
<rect x="342" y="226" width="15" height="14" fill="#20ff88"/>
<rect x="359" y="226" width="15" height="14" fill="#d0ff00"/>
<rect x="376" y="226" width="15" height="14" fill="#20ff88"/>
<rect x="393" y="226" width="15" height="14" fill="#20ff88"/>
<rect x="2" y="242" width="15" height="14" fill="#d0ff00"/>
<rect x="19" y="242" width="15" height="14" fill="#20ff88"/>
<rect x="36" y="242" width="15" height="14" fill="#78ff38"/>
<rect x="53" y="242" width="15" height="14" fill="#f8ff00"/>
<rect x="70" y="242" width="15" height="14" fill="#00ffb0"/>
<rect x="87" y="242" width="15" height="14" fill="#20ff88"/>
<rect x="104" y="242" width="15" height="14" fill="#50ff58"/>
<rect x="121" y="242" width="15" height="14" fill="#f8ff00"/>
<rect x="138" y="242" width="15" height="14" fill="#50ff58"/>
<rect x="155" y="242" width="15" height="14" fill="#20ff88"/>
<rect x="172" y="242" width="15" height="14" fill="#50ff58"/>
<rect x="189" y="242" width="15" height="14" fill="#20ff88"/>
<rect x="206" y="242" width="15" height="14" fill="#20ff88"/>
<rect x="223" y="242" width="15" height="14" fill="#00ffd8"/>
<rect x="240" y="242" width="15" height="14" fill="#00ffd8"/>
<rect x="257" y="242" width="15" height="14" fill="#00ffb0"/>
<rect x="274" y="242" width="15" height="14" fill="#50ff58"/>
<rect x="291" y="242" width="15" height="14" fill="#78ff38"/>
<rect x="308" y="242" width="15" height="14" fill="#00ffb0"/>
<rect x="325" y="242" width="15" height="14" fill="#00ffd8"/>
<rect x="342" y="242" width="15" height="14" fill="#20ff88"/>
<rect x="359" y="242" width="15" height="14" fill="#20ff88"/>
<rect x="376" y="242" width="15" height="14" fill="#00ffd8"/>
<rect x="393" y="242" width="15" height="14" fill="#20ff88"/>
</svg></div>
<!-- Live - Toolbar window: 54..287 x 490..550 -->
<div class="a" style="left:54px;top:490px;width:233px;height:60px;background:#0a50e0;border:1px solid #0030c8;border-top-color:#2a6af0">
<div class="a" style="left:0;top:0;right:0;height:21px;background:linear-gradient(180deg,#1a64f0 0,#0c58ea 3px,#0450e2 10px,#0a58ea 16px,#0648d8 21px)"></div>
<div class="t" style="left:1.500px;top:4px;color:#fff;font-family:'DejaVu Sans Condensed','DejaVu Sans',sans-serif;font-weight:bold;font-size:11px;letter-spacing:0.1px">Live - Toolbar</div>
<div class="a face" style="left:2px;top:21px;width:227px;height:35px"></div>
<div class="btn" style="left:4px;top:23px;width:24px;height:29px;box-shadow:inset -1px -1px 0 #aca899"></div>
<div class="a" style="left:10px;top:31px;width:12px;height:13px;background:linear-gradient(90deg,#f00 0,#f00 4px,#0d0 4px,#0d0 8px,#00f 8px)"></div>
<div class="a" style="left:29px;top:23px;width:24px;height:29px;border:1px solid #000;background:#f4f2e8;box-shadow:inset 1px 1px 0 #716f64,inset -1px -1px 0 #fff"></div>
<svg class="a" style="left:34px;top:31px" width="14" height="14" viewBox="0 0 14 14"><rect x="2.500" y="0.500" width="11" height="12.500" fill="#ddd8c8" stroke="#aca899"/><rect x="0.500" y="1" width="1.500" height="4" fill="#00f"/><rect x="0.500" y="5" width="1.500" height="4" fill="#0d0"/><rect x="0.500" y="9" width="1.500" height="4" fill="#f00"/><path d="M4.500 13V6.500a3.500 3.500 0 0 1 7 0V13M4.500 9h7" stroke="#000" stroke-width="1.800" fill="none"/></svg>
<div class="btn" style="left:55px;top:23px;width:24px;height:29px;box-shadow:inset -1px -1px 0 #aca899"></div>
<svg class="a" style="left:60px;top:31px" width="14" height="14" viewBox="0 0 14 14"><rect x="1.500" y="1" width="12" height="12" fill="#f4f2e8" stroke="#000" stroke-width="1.300"/><path d="M2 12.500L13 1.500" stroke="#000" stroke-width="1.100"/><rect x="0.800" y="1" width="1.300" height="4" fill="#00f"/><rect x="0.800" y="5" width="1.300" height="4" fill="#0d0"/><rect x="0.800" y="9" width="1.300" height="4" fill="#f00"/></svg>
<div class="a" style="left:85px;top:22px;width:144px;height:33px;border:1px solid;border-color:#aca899 #fff #fff #aca899;box-shadow:inset 1px 1px 0 #716f64,inset -1px -1px 0 #f1efe2,inset 2px 2px 0 #aca899,inset -2px -2px 0 #fff,inset 3px 3px 0 #716f64"></div>
</div>
<!-- Live Image Window -->
<div class="win" style="left:796px;top:322px;width:799px;height:825px">
<div class="tb"></div><div class="bl"></div><div class="br"></div><div class="bb"></div>
<div class="cap" style="left:6.500px;top:9px">Live Image Window</div>
<svg class="a" style="left:3px;top:30px" width="791" height="791" viewBox="0 0 791 791">
<defs>
<radialGradient id="bgG" cx="0.5" cy="0.5" r="0.75"><stop offset="0" stop-color="#00005e"/><stop offset="0.55" stop-color="#000054"/><stop offset="1" stop-color="#00004a"/></radialGradient>
<radialGradient id="glow"><stop offset="0" stop-color="#1010d0" stop-opacity="0.9"/><stop offset="1" stop-color="#0000a0" stop-opacity="0"/></radialGradient>
<filter id="nz" x="0" y="0" width="100%" height="100%"><feTurbulence type="fractalNoise" baseFrequency="0.32" numOctaves="1" seed="3"/><feColorMatrix type="matrix" values="0 0 0 0 0  0 0 0 0 0  0 0 0 0 0.30  0 0 0 1.3 -0.42"/></filter>
<filter id="nzd" x="0" y="0" width="100%" height="100%"><feTurbulence type="fractalNoise" baseFrequency="0.30" numOctaves="1" seed="11"/><feColorMatrix type="matrix" values="0 0 0 0 0  0 0 0 0 0  0 0 0 0 0.14  0 0 0 1.3 -0.42"/></filter>
<filter id="px" x="0" y="0" width="791" height="791" filterUnits="userSpaceOnUse" color-interpolation-filters="sRGB"><feFlood x="1" y="1" width="1" height="1"/><feComposite width="3" height="3"/><feTile result="a"/><feComposite in="SourceGraphic" in2="a" operator="in"/><feMorphology operator="dilate" radius="1"/></filter>
<filter id="b1" x="-5%" y="-5%" width="110%" height="110%"><feGaussianBlur stdDeviation="0.9"/></filter>
<filter id="b3" x="-10%" y="-100%" width="120%" height="300%"><feGaussianBlur stdDeviation="5"/></filter>
<filter id="b2" x="-20%" y="-20%" width="140%" height="140%"><feGaussianBlur stdDeviation="1.6"/></filter>
<g id="w">
<rect x="0.500" y="0.500" width="21.500" height="22" rx="5.500" fill="#0030d0"/>
<rect x="1.500" y="1.500" width="19.500" height="20" rx="5" fill="#0090ff"/>
<rect x="2.700" y="2.700" width="17.100" height="17.600" rx="4.500" fill="#00f2ff"/>
</g>
</defs>
<g filter="url(#px)">
<rect width="791" height="791" fill="url(#bgG)"/>
<ellipse cx="655" cy="45" rx="95" ry="70" fill="url(#glow)"/>
<rect x="-20" y="642" width="831" height="24" fill="#0000b4" opacity="0.3" filter="url(#b3)"/><rect x="60" y="612" width="680" height="22" fill="#000040" opacity="0.35" filter="url(#b3)"/>
<rect x="79" y="181" width="640" height="428" fill="#000098" opacity="0.8" filter="url(#b2)"/>
<rect width="791" height="791" filter="url(#nzd)"/>
<rect width="791" height="791" filter="url(#nz)"/>
<use href="#w" x="75.5" y="178.0"/>
<use href="#w" x="102.5" y="178.0"/>
<use href="#w" x="129.5" y="178.0"/>
<use href="#w" x="156.5" y="178.0"/>
<use href="#w" x="183.5" y="178.0"/>
<use href="#w" x="210.5" y="178.0"/>
<use href="#w" x="237.5" y="178.0"/>
<use href="#w" x="264.5" y="178.0"/>
<use href="#w" x="291.5" y="178.0"/>
<use href="#w" x="318.5" y="178.0"/>
<use href="#w" x="345.5" y="178.0"/>
<use href="#w" x="372.5" y="178.0"/>
<use href="#w" x="399.5" y="178.0"/>
<use href="#w" x="426.5" y="178.0"/>
<use href="#w" x="453.5" y="178.0"/>
<use href="#w" x="480.5" y="178.0"/>
<use href="#w" x="507.5" y="178.0"/>
<use href="#w" x="534.5" y="178.0"/>
<use href="#w" x="561.5" y="178.0"/>
<use href="#w" x="588.5" y="178.0"/>
<use href="#w" x="615.5" y="178.0"/>
<use href="#w" x="642.5" y="178.0"/>
<use href="#w" x="669.5" y="178.0"/>
<use href="#w" x="696.5" y="178.0"/>
<use href="#w" x="75.5" y="205.3"/>
<use href="#w" x="102.5" y="205.3"/>
<use href="#w" x="129.5" y="205.3"/>
<use href="#w" x="156.5" y="205.3"/>
<use href="#w" x="183.5" y="205.3"/>
<use href="#w" x="210.5" y="205.3"/>
<use href="#w" x="237.5" y="205.3"/>
<use href="#w" x="264.5" y="205.3"/>
<use href="#w" x="291.5" y="205.3"/>
<use href="#w" x="318.5" y="205.3"/>
<use href="#w" x="345.5" y="205.3"/>
<use href="#w" x="372.5" y="205.3"/>
<use href="#w" x="399.5" y="205.3"/>
<use href="#w" x="426.5" y="205.3"/>
<use href="#w" x="453.5" y="205.3"/>
<use href="#w" x="480.5" y="205.3"/>
<use href="#w" x="507.5" y="205.3"/>
<use href="#w" x="534.5" y="205.3"/>
<use href="#w" x="561.5" y="205.3"/>
<use href="#w" x="588.5" y="205.3"/>
<use href="#w" x="615.5" y="205.3"/>
<use href="#w" x="642.5" y="205.3"/>
<use href="#w" x="669.5" y="205.3"/>
<use href="#w" x="696.5" y="205.3"/>
<use href="#w" x="75.5" y="232.6"/>
<use href="#w" x="102.5" y="232.6"/>
<use href="#w" x="129.5" y="232.6"/>
<use href="#w" x="156.5" y="232.6"/>
<use href="#w" x="183.5" y="232.6"/>
<use href="#w" x="210.5" y="232.6"/>
<use href="#w" x="237.5" y="232.6"/>
<use href="#w" x="264.5" y="232.6"/>
<use href="#w" x="291.5" y="232.6"/>
<use href="#w" x="318.5" y="232.6"/>
<use href="#w" x="345.5" y="232.6"/>
<use href="#w" x="372.5" y="232.6"/>
<use href="#w" x="399.5" y="232.6"/>
<use href="#w" x="426.5" y="232.6"/>
<use href="#w" x="453.5" y="232.6"/>
<use href="#w" x="480.5" y="232.6"/>
<use href="#w" x="507.5" y="232.6"/>
<use href="#w" x="534.5" y="232.6"/>
<use href="#w" x="561.5" y="232.6"/>
<use href="#w" x="588.5" y="232.6"/>
<use href="#w" x="615.5" y="232.6"/>
<use href="#w" x="642.5" y="232.6"/>
<use href="#w" x="669.5" y="232.6"/>
<use href="#w" x="696.5" y="232.6"/>
<use href="#w" x="75.5" y="259.9"/>
<use href="#w" x="102.5" y="259.9"/>
<use href="#w" x="129.5" y="259.9"/>
<use href="#w" x="156.5" y="259.9"/>
<use href="#w" x="183.5" y="259.9"/>
<use href="#w" x="210.5" y="259.9"/>
<use href="#w" x="237.5" y="259.9"/>
<use href="#w" x="264.5" y="259.9"/>
<use href="#w" x="291.5" y="259.9"/>
<use href="#w" x="318.5" y="259.9"/>
<use href="#w" x="345.5" y="259.9"/>
<use href="#w" x="372.5" y="259.9"/>
<use href="#w" x="399.5" y="259.9"/>
<use href="#w" x="426.5" y="259.9"/>
<use href="#w" x="453.5" y="259.9"/>
<use href="#w" x="480.5" y="259.9"/>
<use href="#w" x="507.5" y="259.9"/>
<use href="#w" x="534.5" y="259.9"/>
<use href="#w" x="561.5" y="259.9"/>
<use href="#w" x="588.5" y="259.9"/>
<use href="#w" x="615.5" y="259.9"/>
<use href="#w" x="642.5" y="259.9"/>
<use href="#w" x="669.5" y="259.9"/>
<use href="#w" x="696.5" y="259.9"/>
<use href="#w" x="75.5" y="287.2"/>
<use href="#w" x="102.5" y="287.2"/>
<use href="#w" x="129.5" y="287.2"/>
<use href="#w" x="156.5" y="287.2"/>
<use href="#w" x="183.5" y="287.2"/>
<use href="#w" x="210.5" y="287.2"/>
<use href="#w" x="237.5" y="287.2"/>
<use href="#w" x="264.5" y="287.2"/>
<use href="#w" x="291.5" y="287.2"/>
<use href="#w" x="318.5" y="287.2"/>
<use href="#w" x="345.5" y="287.2"/>
<use href="#w" x="372.5" y="287.2"/>
<use href="#w" x="399.5" y="287.2"/>
<use href="#w" x="426.5" y="287.2"/>
<use href="#w" x="453.5" y="287.2"/>
<use href="#w" x="480.5" y="287.2"/>
<use href="#w" x="507.5" y="287.2"/>
<use href="#w" x="534.5" y="287.2"/>
<use href="#w" x="561.5" y="287.2"/>
<use href="#w" x="588.5" y="287.2"/>
<use href="#w" x="615.5" y="287.2"/>
<use href="#w" x="642.5" y="287.2"/>
<use href="#w" x="669.5" y="287.2"/>
<use href="#w" x="696.5" y="287.2"/>
<use href="#w" x="75.5" y="314.5"/>
<use href="#w" x="102.5" y="314.5"/>
<use href="#w" x="129.5" y="314.5"/>
<use href="#w" x="156.5" y="314.5"/>
<use href="#w" x="183.5" y="314.5"/>
<use href="#w" x="210.5" y="314.5"/>
<use href="#w" x="237.5" y="314.5"/>
<use href="#w" x="264.5" y="314.5"/>
<use href="#w" x="291.5" y="314.5"/>
<use href="#w" x="318.5" y="314.5"/>
<use href="#w" x="345.5" y="314.5"/>
<use href="#w" x="372.5" y="314.5"/>
<use href="#w" x="399.5" y="314.5"/>
<use href="#w" x="426.5" y="314.5"/>
<use href="#w" x="453.5" y="314.5"/>
<use href="#w" x="480.5" y="314.5"/>
<use href="#w" x="507.5" y="314.5"/>
<use href="#w" x="534.5" y="314.5"/>
<use href="#w" x="561.5" y="314.5"/>
<use href="#w" x="588.5" y="314.5"/>
<use href="#w" x="615.5" y="314.5"/>
<use href="#w" x="642.5" y="314.5"/>
<use href="#w" x="669.5" y="314.5"/>
<use href="#w" x="696.5" y="314.5"/>
<use href="#w" x="75.5" y="341.8"/>
<use href="#w" x="102.5" y="341.8"/>
<use href="#w" x="129.5" y="341.8"/>
<use href="#w" x="156.5" y="341.8"/>
<use href="#w" x="183.5" y="341.8"/>
<use href="#w" x="210.5" y="341.8"/>
<use href="#w" x="237.5" y="341.8"/>
<use href="#w" x="264.5" y="341.8"/>
<use href="#w" x="291.5" y="341.8"/>
<use href="#w" x="318.5" y="341.8"/>
<use href="#w" x="345.5" y="341.8"/>
<use href="#w" x="372.5" y="341.8"/>
<use href="#w" x="399.5" y="341.8"/>
<use href="#w" x="426.5" y="341.8"/>
<use href="#w" x="453.5" y="341.8"/>
<use href="#w" x="480.5" y="341.8"/>
<use href="#w" x="507.5" y="341.8"/>
<use href="#w" x="534.5" y="341.8"/>
<use href="#w" x="561.5" y="341.8"/>
<use href="#w" x="588.5" y="341.8"/>
<use href="#w" x="615.5" y="341.8"/>
<use href="#w" x="642.5" y="341.8"/>
<use href="#w" x="669.5" y="341.8"/>
<use href="#w" x="696.5" y="341.8"/>
<use href="#w" x="75.5" y="369.1"/>
<use href="#w" x="102.5" y="369.1"/>
<use href="#w" x="129.5" y="369.1"/>
<use href="#w" x="156.5" y="369.1"/>
<use href="#w" x="183.5" y="369.1"/>
<use href="#w" x="210.5" y="369.1"/>
<use href="#w" x="237.5" y="369.1"/>
<use href="#w" x="264.5" y="369.1"/>
<use href="#w" x="291.5" y="369.1"/>
<use href="#w" x="318.5" y="369.1"/>
<use href="#w" x="345.5" y="369.1"/>
<use href="#w" x="372.5" y="369.1"/>
<use href="#w" x="399.5" y="369.1"/>
<use href="#w" x="426.5" y="369.1"/>
<use href="#w" x="453.5" y="369.1"/>
<use href="#w" x="480.5" y="369.1"/>
<use href="#w" x="507.5" y="369.1"/>
<use href="#w" x="534.5" y="369.1"/>
<use href="#w" x="561.5" y="369.1"/>
<use href="#w" x="588.5" y="369.1"/>
<use href="#w" x="615.5" y="369.1"/>
<use href="#w" x="642.5" y="369.1"/>
<use href="#w" x="669.5" y="369.1"/>
<use href="#w" x="696.5" y="369.1"/>
<use href="#w" x="75.5" y="396.4"/>
<use href="#w" x="102.5" y="396.4"/>
<use href="#w" x="129.5" y="396.4"/>
<use href="#w" x="156.5" y="396.4"/>
<use href="#w" x="183.5" y="396.4"/>
<use href="#w" x="210.5" y="396.4"/>
<use href="#w" x="237.5" y="396.4"/>
<use href="#w" x="264.5" y="396.4"/>
<use href="#w" x="291.5" y="396.4"/>
<use href="#w" x="318.5" y="396.4"/>
<use href="#w" x="345.5" y="396.4"/>
<use href="#w" x="372.5" y="396.4"/>
<use href="#w" x="399.5" y="396.4"/>
<use href="#w" x="426.5" y="396.4"/>
<use href="#w" x="453.5" y="396.4"/>
<use href="#w" x="480.5" y="396.4"/>
<use href="#w" x="507.5" y="396.4"/>
<use href="#w" x="534.5" y="396.4"/>
<use href="#w" x="561.5" y="396.4"/>
<use href="#w" x="588.5" y="396.4"/>
<use href="#w" x="615.5" y="396.4"/>
<use href="#w" x="642.5" y="396.4"/>
<use href="#w" x="669.5" y="396.4"/>
<use href="#w" x="696.5" y="396.4"/>
<use href="#w" x="75.5" y="423.7"/>
<use href="#w" x="102.5" y="423.7"/>
<use href="#w" x="129.5" y="423.7"/>
<use href="#w" x="156.5" y="423.7"/>
<use href="#w" x="183.5" y="423.7"/>
<use href="#w" x="210.5" y="423.7"/>
<use href="#w" x="237.5" y="423.7"/>
<use href="#w" x="264.5" y="423.7"/>
<use href="#w" x="291.5" y="423.7"/>
<use href="#w" x="318.5" y="423.7"/>
<use href="#w" x="345.5" y="423.7"/>
<use href="#w" x="372.5" y="423.7"/>
<use href="#w" x="399.5" y="423.7"/>
<use href="#w" x="426.5" y="423.7"/>
<use href="#w" x="453.5" y="423.7"/>
<use href="#w" x="480.5" y="423.7"/>
<use href="#w" x="507.5" y="423.7"/>
<use href="#w" x="534.5" y="423.7"/>
<use href="#w" x="561.5" y="423.7"/>
<use href="#w" x="588.5" y="423.7"/>
<use href="#w" x="615.5" y="423.7"/>
<use href="#w" x="642.5" y="423.7"/>
<use href="#w" x="669.5" y="423.7"/>
<use href="#w" x="696.5" y="423.7"/>
<use href="#w" x="75.5" y="451.0"/>
<use href="#w" x="102.5" y="451.0"/>
<use href="#w" x="129.5" y="451.0"/>
<use href="#w" x="156.5" y="451.0"/>
<use href="#w" x="183.5" y="451.0"/>
<use href="#w" x="210.5" y="451.0"/>
<use href="#w" x="237.5" y="451.0"/>
<use href="#w" x="264.5" y="451.0"/>
<use href="#w" x="291.5" y="451.0"/>
<use href="#w" x="318.5" y="451.0"/>
<use href="#w" x="345.5" y="451.0"/>
<use href="#w" x="372.5" y="451.0"/>
<use href="#w" x="399.5" y="451.0"/>
<use href="#w" x="426.5" y="451.0"/>
<use href="#w" x="453.5" y="451.0"/>
<use href="#w" x="480.5" y="451.0"/>
<use href="#w" x="507.5" y="451.0"/>
<use href="#w" x="534.5" y="451.0"/>
<use href="#w" x="561.5" y="451.0"/>
<use href="#w" x="588.5" y="451.0"/>
<use href="#w" x="615.5" y="451.0"/>
<use href="#w" x="642.5" y="451.0"/>
<use href="#w" x="669.5" y="451.0"/>
<use href="#w" x="696.5" y="451.0"/>
<use href="#w" x="75.5" y="478.3"/>
<use href="#w" x="102.5" y="478.3"/>
<use href="#w" x="129.5" y="478.3"/>
<use href="#w" x="156.5" y="478.3"/>
<use href="#w" x="183.5" y="478.3"/>
<use href="#w" x="210.5" y="478.3"/>
<use href="#w" x="237.5" y="478.3"/>
<use href="#w" x="264.5" y="478.3"/>
<use href="#w" x="291.5" y="478.3"/>
<use href="#w" x="318.5" y="478.3"/>
<use href="#w" x="345.5" y="478.3"/>
<use href="#w" x="372.5" y="478.3"/>
<use href="#w" x="399.5" y="478.3"/>
<use href="#w" x="426.5" y="478.3"/>
<use href="#w" x="453.5" y="478.3"/>
<use href="#w" x="480.5" y="478.3"/>
<use href="#w" x="507.5" y="478.3"/>
<use href="#w" x="534.5" y="478.3"/>
<use href="#w" x="561.5" y="478.3"/>
<use href="#w" x="588.5" y="478.3"/>
<use href="#w" x="615.5" y="478.3"/>
<use href="#w" x="642.5" y="478.3"/>
<use href="#w" x="669.5" y="478.3"/>
<use href="#w" x="696.5" y="478.3"/>
<use href="#w" x="75.5" y="505.6"/>
<use href="#w" x="102.5" y="505.6"/>
<use href="#w" x="129.5" y="505.6"/>
<use href="#w" x="156.5" y="505.6"/>
<use href="#w" x="183.5" y="505.6"/>
<use href="#w" x="210.5" y="505.6"/>
<use href="#w" x="237.5" y="505.6"/>
<use href="#w" x="264.5" y="505.6"/>
<use href="#w" x="291.5" y="505.6"/>
<use href="#w" x="318.5" y="505.6"/>
<use href="#w" x="345.5" y="505.6"/>
<use href="#w" x="372.5" y="505.6"/>
<use href="#w" x="399.5" y="505.6"/>
<use href="#w" x="426.5" y="505.6"/>
<use href="#w" x="453.5" y="505.6"/>
<use href="#w" x="480.5" y="505.6"/>
<use href="#w" x="507.5" y="505.6"/>
<use href="#w" x="534.5" y="505.6"/>
<use href="#w" x="561.5" y="505.6"/>
<use href="#w" x="588.5" y="505.6"/>
<use href="#w" x="615.5" y="505.6"/>
<use href="#w" x="642.5" y="505.6"/>
<use href="#w" x="669.5" y="505.6"/>
<use href="#w" x="696.5" y="505.6"/>
<use href="#w" x="75.5" y="532.9"/>
<use href="#w" x="102.5" y="532.9"/>
<use href="#w" x="129.5" y="532.9"/>
<use href="#w" x="156.5" y="532.9"/>
<use href="#w" x="183.5" y="532.9"/>
<use href="#w" x="210.5" y="532.9"/>
<use href="#w" x="237.5" y="532.9"/>
<use href="#w" x="264.5" y="532.9"/>
<use href="#w" x="291.5" y="532.9"/>
<use href="#w" x="318.5" y="532.9"/>
<use href="#w" x="345.5" y="532.9"/>
<use href="#w" x="372.5" y="532.9"/>
<use href="#w" x="399.5" y="532.9"/>
<use href="#w" x="426.5" y="532.9"/>
<use href="#w" x="453.5" y="532.9"/>
<use href="#w" x="480.5" y="532.9"/>
<use href="#w" x="507.5" y="532.9"/>
<use href="#w" x="534.5" y="532.9"/>
<use href="#w" x="561.5" y="532.9"/>
<use href="#w" x="588.5" y="532.9"/>
<use href="#w" x="615.5" y="532.9"/>
<use href="#w" x="642.5" y="532.9"/>
<use href="#w" x="669.5" y="532.9"/>
<use href="#w" x="696.5" y="532.9"/>
<use href="#w" x="75.5" y="560.2"/>
<use href="#w" x="102.5" y="560.2"/>
<use href="#w" x="129.5" y="560.2"/>
<use href="#w" x="156.5" y="560.2"/>
<use href="#w" x="183.5" y="560.2"/>
<use href="#w" x="210.5" y="560.2"/>
<use href="#w" x="237.5" y="560.2"/>
<use href="#w" x="264.5" y="560.2"/>
<use href="#w" x="291.5" y="560.2"/>
<use href="#w" x="318.5" y="560.2"/>
<use href="#w" x="345.5" y="560.2"/>
<use href="#w" x="372.5" y="560.2"/>
<use href="#w" x="399.5" y="560.2"/>
<use href="#w" x="426.5" y="560.2"/>
<use href="#w" x="453.5" y="560.2"/>
<use href="#w" x="480.5" y="560.2"/>
<use href="#w" x="507.5" y="560.2"/>
<use href="#w" x="534.5" y="560.2"/>
<use href="#w" x="561.5" y="560.2"/>
<use href="#w" x="588.5" y="560.2"/>
<use href="#w" x="615.5" y="560.2"/>
<use href="#w" x="642.5" y="560.2"/>
<use href="#w" x="669.5" y="560.2"/>
<use href="#w" x="696.5" y="560.2"/>
<use href="#w" x="75.5" y="587.5"/>
<use href="#w" x="102.5" y="587.5"/>
<use href="#w" x="129.5" y="587.5"/>
<use href="#w" x="156.5" y="587.5"/>
<use href="#w" x="183.5" y="587.5"/>
<use href="#w" x="210.5" y="587.5"/>
<use href="#w" x="237.5" y="587.5"/>
<use href="#w" x="264.5" y="587.5"/>
<use href="#w" x="291.5" y="587.5"/>
<use href="#w" x="318.5" y="587.5"/>
<use href="#w" x="345.5" y="587.5"/>
<use href="#w" x="372.5" y="587.5"/>
<use href="#w" x="399.5" y="587.5"/>
<use href="#w" x="426.5" y="587.5"/>
<use href="#w" x="453.5" y="587.5"/>
<use href="#w" x="480.5" y="587.5"/>
<use href="#w" x="507.5" y="587.5"/>
<use href="#w" x="534.5" y="587.5"/>
<use href="#w" x="561.5" y="587.5"/>
<use href="#w" x="588.5" y="587.5"/>
<use href="#w" x="615.5" y="587.5"/>
<use href="#w" x="642.5" y="587.5"/>
<use href="#w" x="669.5" y="587.5"/>
<use href="#w" x="696.5" y="587.5"/>
<g filter="url(#b1)">
<rect x="80.5" y="183.2" width="12.5" height="12.8" rx="3" fill="#00ffc4"/>
<rect x="107.5" y="183.2" width="12.5" height="12.8" rx="3" fill="#00ffc4"/>
<rect x="134.5" y="183.2" width="12.5" height="12.8" rx="3" fill="#00ffb3"/>
<rect x="161.5" y="183.2" width="12.5" height="12.8" rx="3" fill="#00ffc2"/>
<rect x="188.5" y="183.2" width="12.5" height="12.8" rx="3" fill="#00ffb3"/>
<rect x="215.5" y="183.2" width="12.5" height="12.8" rx="3" fill="#00ffb8"/>
<rect x="242.5" y="183.2" width="12.5" height="12.8" rx="3" fill="#00ffc0"/>
<rect x="269.5" y="183.2" width="12.5" height="12.8" rx="3" fill="#00ffb0"/>
<rect x="296.5" y="183.2" width="12.5" height="12.8" rx="3" fill="#00ffbe"/>
<rect x="323.5" y="183.2" width="12.5" height="12.8" rx="3" fill="#00ffb4"/>
<rect x="350.5" y="183.2" width="12.5" height="12.8" rx="3" fill="#00ffc1"/>
<rect x="377.5" y="183.2" width="12.5" height="12.8" rx="3" fill="#00ffc3"/>
<rect x="404.5" y="183.2" width="12.5" height="12.8" rx="3" fill="#00ffbb"/>
<rect x="431.5" y="183.2" width="12.5" height="12.8" rx="3" fill="#00ffb6"/>
<rect x="458.5" y="183.2" width="12.5" height="12.8" rx="3" fill="#00ffcf"/>
<rect x="485.5" y="183.2" width="12.5" height="12.8" rx="3" fill="#00ffcd"/>
<rect x="512.5" y="183.2" width="12.5" height="12.8" rx="3" fill="#00ffc3"/>
<rect x="539.5" y="183.2" width="12.5" height="12.8" rx="3" fill="#00ffbb"/>
<rect x="566.5" y="183.2" width="12.5" height="12.8" rx="3" fill="#00ffc9"/>
<rect x="593.5" y="183.2" width="12.5" height="12.8" rx="3" fill="#00ffd1"/>
<rect x="620.5" y="183.2" width="12.5" height="12.8" rx="3" fill="#00ffc5"/>
<rect x="674.5" y="183.2" width="12.5" height="12.8" rx="3" fill="#00ffcf"/>
<rect x="80.5" y="210.6" width="12.5" height="12.8" rx="3" fill="#08ffa8"/>
<rect x="106.8" y="209.8" width="14" height="14.3" rx="3" fill="#0effa2"/>
<rect x="133.8" y="209.8" width="14" height="14.3" rx="3" fill="#15ff9b"/>
<rect x="160.8" y="209.8" width="14" height="14.3" rx="3" fill="#26ff8a"/>
<rect x="187.8" y="209.8" width="14" height="14.3" rx="3" fill="#15ff9b"/>
<rect x="214.8" y="209.8" width="14" height="14.3" rx="3" fill="#22ff8e"/>
<rect x="241.8" y="209.8" width="14" height="14.3" rx="3" fill="#25ff8b"/>
<rect x="268.8" y="209.8" width="14" height="14.3" rx="3" fill="#20ff90"/>
<rect x="295.8" y="209.8" width="14" height="14.3" rx="3" fill="#26ff8a"/>
<rect x="322.8" y="209.8" width="14" height="14.3" rx="3" fill="#16ff9a"/>
<rect x="349.8" y="209.8" width="14" height="14.3" rx="3" fill="#14ff9c"/>
<rect x="376.8" y="209.8" width="14" height="14.3" rx="3" fill="#14ff9c"/>
<rect x="403.8" y="209.8" width="14" height="14.3" rx="3" fill="#1dff93"/>
<rect x="431.5" y="210.6" width="12.5" height="12.8" rx="3" fill="#0bffa5"/>
<rect x="458.5" y="210.6" width="12.5" height="12.8" rx="3" fill="#05ffab"/>
<rect x="485.5" y="210.6" width="12.5" height="12.8" rx="3" fill="#0affa6"/>
<rect x="512.5" y="210.6" width="12.5" height="12.8" rx="3" fill="#03ffad"/>
<rect x="539.5" y="210.6" width="12.5" height="12.8" rx="3" fill="#00ffb3"/>
<rect x="566.5" y="210.6" width="12.5" height="12.8" rx="3" fill="#06ffaa"/>
<rect x="593.5" y="210.6" width="12.5" height="12.8" rx="3" fill="#01ffaf"/>
<rect x="620.5" y="210.6" width="12.5" height="12.8" rx="3" fill="#00ffc8"/>
<rect x="647.5" y="210.6" width="12.5" height="12.8" rx="3" fill="#00ffc1"/>
<rect x="674.5" y="210.6" width="12.5" height="12.8" rx="3" fill="#00ffc9"/>
<rect x="701.5" y="210.6" width="12.5" height="12.8" rx="3" fill="#00ffde"/>
<rect x="79.8" y="237.1" width="14" height="14.3" rx="3" fill="#23ff8d"/>
<rect x="106.8" y="237.1" width="14" height="14.3" rx="3" fill="#20ff90"/>
<rect x="133.8" y="237.1" width="14" height="14.3" rx="3" fill="#34ff7c"/>
<rect x="160.8" y="237.1" width="14" height="14.3" rx="3" fill="#22ff8e"/>
<rect x="187.8" y="237.1" width="14" height="14.3" rx="3" fill="#29ff87"/>
<rect x="214.8" y="237.1" width="14" height="14.3" rx="3" fill="#34ff7c"/>
<rect x="241.8" y="237.1" width="14" height="14.3" rx="3" fill="#27ff89"/>
<rect x="268.8" y="237.1" width="14" height="14.3" rx="3" fill="#32ff7e"/>
<rect x="295.8" y="237.1" width="14" height="14.3" rx="3" fill="#28ff88"/>
<rect x="322.8" y="237.1" width="14" height="14.3" rx="3" fill="#34ff7c"/>
<rect x="349.8" y="237.1" width="14" height="14.3" rx="3" fill="#34ff7c"/>
<rect x="376.8" y="237.1" width="14" height="14.3" rx="3" fill="#2bff85"/>
<rect x="403.8" y="237.1" width="14" height="14.3" rx="3" fill="#2fff81"/>
<rect x="430.8" y="237.1" width="14" height="14.3" rx="3" fill="#14ff9c"/>
<rect x="457.8" y="237.1" width="14" height="14.3" rx="3" fill="#19ff97"/>
<rect x="484.8" y="237.1" width="14" height="14.3" rx="3" fill="#15ff9b"/>
<rect x="511.8" y="237.1" width="14" height="14.3" rx="3" fill="#10ffa0"/>
<rect x="539.5" y="237.8" width="12.5" height="12.8" rx="3" fill="#0bffa5"/>
<rect x="565.8" y="237.1" width="14" height="14.3" rx="3" fill="#10ffa0"/>
<rect x="592.8" y="237.1" width="14" height="14.3" rx="3" fill="#10ffa0"/>
<rect x="620.5" y="237.8" width="12.5" height="12.8" rx="3" fill="#00ffb8"/>
<rect x="647.5" y="237.8" width="12.5" height="12.8" rx="3" fill="#00ffb6"/>
<rect x="674.5" y="237.8" width="12.5" height="12.8" rx="3" fill="#00ffd1"/>
<rect x="79.8" y="264.4" width="14" height="14.3" rx="3" fill="#2cff84"/>
<rect x="106.8" y="264.4" width="14" height="14.3" rx="3" fill="#3fff71"/>
<rect x="133.8" y="264.4" width="14" height="14.3" rx="3" fill="#3dff73"/>
<rect x="160.8" y="264.4" width="14" height="14.3" rx="3" fill="#34ff7c"/>
<rect x="187.8" y="264.4" width="14" height="14.3" rx="3" fill="#36ff7a"/>
<rect x="214.8" y="264.4" width="14" height="14.3" rx="3" fill="#40ff70"/>
<rect x="241.8" y="264.4" width="14" height="14.3" rx="3" fill="#32ff7e"/>
<rect x="268.8" y="264.4" width="14" height="14.3" rx="3" fill="#40ff70"/>
<rect x="295.8" y="264.4" width="14" height="14.3" rx="3" fill="#3bff75"/>
<rect x="322.8" y="264.4" width="14" height="14.3" rx="3" fill="#34ff7c"/>
<rect x="349.8" y="264.4" width="14" height="14.3" rx="3" fill="#31ff7f"/>
<rect x="376.8" y="264.4" width="14" height="14.3" rx="3" fill="#3eff72"/>
<rect x="403.8" y="264.4" width="14" height="14.3" rx="3" fill="#29ff87"/>
<rect x="430.8" y="264.4" width="14" height="14.3" rx="3" fill="#1dff93"/>
<rect x="457.8" y="264.4" width="14" height="14.3" rx="3" fill="#1cff94"/>
<rect x="484.8" y="264.4" width="14" height="14.3" rx="3" fill="#26ff8a"/>
<rect x="511.8" y="264.4" width="14" height="14.3" rx="3" fill="#0dffa3"/>
<rect x="538.8" y="264.4" width="14" height="14.3" rx="3" fill="#14ff9c"/>
<rect x="565.8" y="264.4" width="14" height="14.3" rx="3" fill="#12ff9e"/>
<rect x="592.8" y="264.4" width="14" height="14.3" rx="3" fill="#17ff99"/>
<rect x="620.5" y="265.1" width="12.5" height="12.8" rx="3" fill="#09ffa7"/>
<rect x="647.5" y="265.1" width="12.5" height="12.8" rx="3" fill="#06ffaa"/>
<rect x="674.5" y="265.1" width="12.5" height="12.8" rx="3" fill="#00ffc4"/>
<rect x="79.8" y="291.7" width="14" height="14.3" rx="3" fill="#31ff7f"/>
<rect x="106.8" y="291.7" width="14" height="14.3" rx="3" fill="#4cff67"/>
<rect x="133.8" y="291.7" width="14" height="14.3" rx="3" fill="#52ff62"/>
<rect x="160.8" y="291.7" width="14" height="14.3" rx="3" fill="#3eff72"/>
<rect x="187.8" y="291.7" width="14" height="14.3" rx="3" fill="#3fff71"/>
<rect x="214.8" y="291.7" width="14" height="14.3" rx="3" fill="#44ff6d"/>
<rect x="241.8" y="291.7" width="14" height="14.3" rx="3" fill="#48ff6a"/>
<rect x="268.8" y="291.7" width="14" height="14.3" rx="3" fill="#54ff61"/>
<rect x="295.8" y="291.7" width="14" height="14.3" rx="3" fill="#7eff42"/>
<rect x="322.8" y="291.7" width="14" height="14.3" rx="3" fill="#49ff69"/>
<rect x="349.8" y="291.7" width="14" height="14.3" rx="3" fill="#3dff73"/>
<rect x="376.8" y="291.7" width="14" height="14.3" rx="3" fill="#43ff6d"/>
<rect x="403.8" y="291.7" width="14" height="14.3" rx="3" fill="#3cff74"/>
<rect x="430.8" y="291.7" width="14" height="14.3" rx="3" fill="#31ff7f"/>
<rect x="457.8" y="291.7" width="14" height="14.3" rx="3" fill="#35ff7b"/>
<rect x="484.8" y="291.7" width="14" height="14.3" rx="3" fill="#2cff84"/>
<rect x="511.8" y="291.7" width="14" height="14.3" rx="3" fill="#22ff8e"/>
<rect x="538.8" y="291.7" width="14" height="14.3" rx="3" fill="#22ff8e"/>
<rect x="565.8" y="291.7" width="14" height="14.3" rx="3" fill="#1eff92"/>
<rect x="593.5" y="292.4" width="12.5" height="12.8" rx="3" fill="#0affa6"/>
<rect x="619.8" y="291.7" width="14" height="14.3" rx="3" fill="#12ff9e"/>
<rect x="647.5" y="292.4" width="12.5" height="12.8" rx="3" fill="#0bffa5"/>
<rect x="674.5" y="292.4" width="12.5" height="12.8" rx="3" fill="#05ffab"/>
<rect x="701.5" y="292.4" width="12.5" height="12.8" rx="3" fill="#00ffdc"/>
<rect x="79.8" y="319.0" width="14" height="14.3" rx="3" fill="#34ff7c"/>
<rect x="106.8" y="319.0" width="14" height="14.3" rx="3" fill="#3fff71"/>
<rect x="133.8" y="319.0" width="14" height="14.3" rx="3" fill="#3aff76"/>
<rect x="160.8" y="319.0" width="14" height="14.3" rx="3" fill="#52ff62"/>
<rect x="187.8" y="319.0" width="14" height="14.3" rx="3" fill="#3fff71"/>
<rect x="214.8" y="319.0" width="14" height="14.3" rx="3" fill="#42ff6e"/>
<rect x="241.8" y="319.0" width="14" height="14.3" rx="3" fill="#4bff68"/>
<rect x="268.8" y="319.0" width="14" height="14.3" rx="3" fill="#4dff66"/>
<rect x="295.8" y="319.0" width="14" height="14.3" rx="3" fill="#57ff5f"/>
<rect x="322.8" y="319.0" width="14" height="14.3" rx="3" fill="#46ff6c"/>
<rect x="349.8" y="319.0" width="14" height="14.3" rx="3" fill="#40ff70"/>
<rect x="376.8" y="319.0" width="14" height="14.3" rx="3" fill="#3eff72"/>
<rect x="403.8" y="319.0" width="14" height="14.3" rx="3" fill="#38ff78"/>
<rect x="430.8" y="319.0" width="14" height="14.3" rx="3" fill="#2eff82"/>
<rect x="457.8" y="319.0" width="14" height="14.3" rx="3" fill="#1fff91"/>
<rect x="484.8" y="319.0" width="14" height="14.3" rx="3" fill="#32ff7e"/>
<rect x="511.8" y="319.0" width="14" height="14.3" rx="3" fill="#26ff8a"/>
<rect x="538.8" y="319.0" width="14" height="14.3" rx="3" fill="#17ff99"/>
<rect x="565.8" y="319.0" width="14" height="14.3" rx="3" fill="#14ff9c"/>
<rect x="592.8" y="319.0" width="14" height="14.3" rx="3" fill="#13ff9d"/>
<rect x="620.5" y="319.8" width="12.5" height="12.8" rx="3" fill="#05ffab"/>
<rect x="647.5" y="319.8" width="12.5" height="12.8" rx="3" fill="#00ffb6"/>
<rect x="674.5" y="319.8" width="12.5" height="12.8" rx="3" fill="#05ffab"/>
<rect x="701.5" y="319.8" width="12.5" height="12.8" rx="3" fill="#00ffd5"/>
<rect x="79.8" y="346.3" width="14" height="14.3" rx="3" fill="#38ff78"/>
<rect x="106.8" y="346.3" width="14" height="14.3" rx="3" fill="#45ff6c"/>
<rect x="133.8" y="346.3" width="14" height="14.3" rx="3" fill="#3dff73"/>
<rect x="160.8" y="346.3" width="14" height="14.3" rx="3" fill="#44ff6d"/>
<rect x="187.8" y="346.3" width="14" height="14.3" rx="3" fill="#4cff67"/>
<rect x="214.8" y="346.3" width="14" height="14.3" rx="3" fill="#4dff66"/>
<rect x="241.8" y="346.3" width="14" height="14.3" rx="3" fill="#64ff55"/>
<rect x="268.8" y="346.3" width="14" height="14.3" rx="3" fill="#51ff63"/>
<rect x="295.8" y="346.3" width="14" height="14.3" rx="3" fill="#50ff64"/>
<rect x="322.8" y="346.3" width="14" height="14.3" rx="3" fill="#68ff52"/>
<rect x="349.8" y="346.3" width="14" height="14.3" rx="3" fill="#56ff60"/>
<rect x="376.8" y="346.3" width="14" height="14.3" rx="3" fill="#41ff6f"/>
<rect x="403.8" y="346.3" width="14" height="14.3" rx="3" fill="#47ff6b"/>
<rect x="430.8" y="346.3" width="14" height="14.3" rx="3" fill="#27ff89"/>
<rect x="457.8" y="346.3" width="14" height="14.3" rx="3" fill="#2eff82"/>
<rect x="484.8" y="346.3" width="14" height="14.3" rx="3" fill="#37ff79"/>
<rect x="511.8" y="346.3" width="14" height="14.3" rx="3" fill="#2eff82"/>
<rect x="538.8" y="346.3" width="14" height="14.3" rx="3" fill="#27ff89"/>
<rect x="565.8" y="346.3" width="14" height="14.3" rx="3" fill="#16ff9a"/>
<rect x="592.8" y="346.3" width="14" height="14.3" rx="3" fill="#15ff9b"/>
<rect x="620.5" y="347.1" width="12.5" height="12.8" rx="3" fill="#02ffae"/>
<rect x="646.8" y="346.3" width="14" height="14.3" rx="3" fill="#0dffa3"/>
<rect x="674.5" y="347.1" width="12.5" height="12.8" rx="3" fill="#00ffb2"/>
<rect x="701.5" y="347.1" width="12.5" height="12.8" rx="3" fill="#00ffdc"/>
<rect x="79.8" y="373.6" width="14" height="14.3" rx="3" fill="#37ff79"/>
<rect x="106.8" y="373.6" width="14" height="14.3" rx="3" fill="#40ff70"/>
<rect x="133.8" y="373.6" width="14" height="14.3" rx="3" fill="#58ff5e"/>
<rect x="160.8" y="373.6" width="14" height="14.3" rx="3" fill="#66ff54"/>
<rect x="187.8" y="373.6" width="14" height="14.3" rx="3" fill="#61ff57"/>
<rect x="214.8" y="373.6" width="14" height="14.3" rx="3" fill="#63ff56"/>
<rect x="241.8" y="373.6" width="14" height="14.3" rx="3" fill="#68ff52"/>
<rect x="268.8" y="373.6" width="14" height="14.3" rx="3" fill="#69ff52"/>
<rect x="295.8" y="373.6" width="14" height="14.3" rx="3" fill="#7eff42"/>
<rect x="322.8" y="373.6" width="14" height="14.3" rx="3" fill="#5dff5a"/>
<rect x="349.8" y="373.6" width="14" height="14.3" rx="3" fill="#bbff1b"/>
<rect x="376.8" y="373.6" width="14" height="14.3" rx="3" fill="#41ff6f"/>
<rect x="403.8" y="373.6" width="14" height="14.3" rx="3" fill="#3bff75"/>
<rect x="430.8" y="373.6" width="14" height="14.3" rx="3" fill="#30ff80"/>
<rect x="457.8" y="373.6" width="14" height="14.3" rx="3" fill="#2aff86"/>
<rect x="484.8" y="373.6" width="14" height="14.3" rx="3" fill="#32ff7e"/>
<rect x="511.8" y="373.6" width="14" height="14.3" rx="3" fill="#33ff7d"/>
<rect x="538.8" y="373.6" width="14" height="14.3" rx="3" fill="#23ff8d"/>
<rect x="565.8" y="373.6" width="14" height="14.3" rx="3" fill="#2aff86"/>
<rect x="592.8" y="373.6" width="14" height="14.3" rx="3" fill="#26ff8a"/>
<rect x="619.8" y="373.6" width="14" height="14.3" rx="3" fill="#17ff99"/>
<rect x="647.5" y="374.4" width="12.5" height="12.8" rx="3" fill="#04ffac"/>
<rect x="674.5" y="374.4" width="12.5" height="12.8" rx="3" fill="#00ffbb"/>
<rect x="79.8" y="400.9" width="14" height="14.3" rx="3" fill="#34ff7c"/>
<rect x="106.8" y="400.9" width="14" height="14.3" rx="3" fill="#3fff71"/>
<rect x="133.8" y="400.9" width="14" height="14.3" rx="3" fill="#51ff63"/>
<rect x="160.8" y="400.9" width="14" height="14.3" rx="3" fill="#63ff56"/>
<rect x="187.8" y="400.9" width="14" height="14.3" rx="3" fill="#61ff58"/>
<rect x="214.8" y="400.9" width="14" height="14.3" rx="3" fill="#58ff5e"/>
<rect x="241.8" y="400.9" width="14" height="14.3" rx="3" fill="#62ff57"/>
<rect x="268.8" y="400.9" width="14" height="14.3" rx="3" fill="#6bff50"/>
<rect x="295.8" y="400.9" width="14" height="14.3" rx="3" fill="#56ff5f"/>
<rect x="322.8" y="400.9" width="14" height="14.3" rx="3" fill="#62ff56"/>
<rect x="349.8" y="400.9" width="14" height="14.3" rx="3" fill="#67ff53"/>
<rect x="376.8" y="400.9" width="14" height="14.3" rx="3" fill="#5bff5c"/>
<rect x="403.8" y="400.9" width="14" height="14.3" rx="3" fill="#52ff63"/>
<rect x="430.8" y="400.9" width="14" height="14.3" rx="3" fill="#35ff7b"/>
<rect x="457.8" y="400.9" width="14" height="14.3" rx="3" fill="#28ff88"/>
<rect x="484.8" y="400.9" width="14" height="14.3" rx="3" fill="#34ff7c"/>
<rect x="511.8" y="400.9" width="14" height="14.3" rx="3" fill="#23ff8d"/>
<rect x="538.8" y="400.9" width="14" height="14.3" rx="3" fill="#2cff84"/>
<rect x="565.8" y="400.9" width="14" height="14.3" rx="3" fill="#2aff86"/>
<rect x="592.8" y="400.9" width="14" height="14.3" rx="3" fill="#17ff99"/>
<rect x="620.5" y="401.6" width="12.5" height="12.8" rx="3" fill="#09ffa7"/>
<rect x="646.8" y="400.9" width="14" height="14.3" rx="3" fill="#13ff9d"/>
<rect x="674.5" y="401.6" width="12.5" height="12.8" rx="3" fill="#04ffac"/>
<rect x="79.8" y="428.2" width="14" height="14.3" rx="3" fill="#34ff7c"/>
<rect x="106.8" y="428.2" width="14" height="14.3" rx="3" fill="#41ff6f"/>
<rect x="133.8" y="428.2" width="14" height="14.3" rx="3" fill="#5fff59"/>
<rect x="160.8" y="428.2" width="14" height="14.3" rx="3" fill="#63ff56"/>
<rect x="187.8" y="428.2" width="14" height="14.3" rx="3" fill="#4dff67"/>
<rect x="214.8" y="428.2" width="14" height="14.3" rx="3" fill="#68ff52"/>
<rect x="241.8" y="428.2" width="14" height="14.3" rx="3" fill="#71ff4b"/>
<rect x="268.8" y="428.2" width="14" height="14.3" rx="3" fill="#6aff51"/>
<rect x="295.8" y="428.2" width="14" height="14.3" rx="3" fill="#86ff3c"/>
<rect x="322.8" y="428.2" width="14" height="14.3" rx="3" fill="#62ff56"/>
<rect x="349.8" y="428.2" width="14" height="14.3" rx="3" fill="#50ff64"/>
<rect x="376.8" y="428.2" width="14" height="14.3" rx="3" fill="#44ff6d"/>
<rect x="403.8" y="428.2" width="14" height="14.3" rx="3" fill="#5dff5a"/>
<rect x="430.8" y="428.2" width="14" height="14.3" rx="3" fill="#3cff74"/>
<rect x="457.8" y="428.2" width="14" height="14.3" rx="3" fill="#33ff7d"/>
<rect x="484.8" y="428.2" width="14" height="14.3" rx="3" fill="#3aff76"/>
<rect x="511.8" y="428.2" width="14" height="14.3" rx="3" fill="#27ff89"/>
<rect x="538.8" y="428.2" width="14" height="14.3" rx="3" fill="#30ff80"/>
<rect x="565.8" y="428.2" width="14" height="14.3" rx="3" fill="#28ff88"/>
<rect x="592.8" y="428.2" width="14" height="14.3" rx="3" fill="#14ff9c"/>
<rect x="620.5" y="429.0" width="12.5" height="12.8" rx="3" fill="#06ffaa"/>
<rect x="647.5" y="429.0" width="12.5" height="12.8" rx="3" fill="#03ffad"/>
<rect x="674.5" y="429.0" width="12.5" height="12.8" rx="3" fill="#00ffb9"/>
<rect x="79.8" y="455.5" width="14" height="14.3" rx="3" fill="#3aff76"/>
<rect x="106.8" y="455.5" width="14" height="14.3" rx="3" fill="#77ff47"/>
<rect x="133.8" y="455.5" width="14" height="14.3" rx="3" fill="#48ff6a"/>
<rect x="160.8" y="455.5" width="14" height="14.3" rx="3" fill="#6bff50"/>
<rect x="187.8" y="455.5" width="14" height="14.3" rx="3" fill="#57ff5f"/>
<rect x="214.8" y="455.5" width="14" height="14.3" rx="3" fill="#5fff59"/>
<rect x="241.8" y="455.5" width="14" height="14.3" rx="3" fill="#8aff39"/>
<rect x="268.8" y="455.5" width="14" height="14.3" rx="3" fill="#77ff47"/>
<rect x="295.8" y="455.5" width="14" height="14.3" rx="3" fill="#93ff32"/>
<rect x="322.8" y="455.5" width="14" height="14.3" rx="3" fill="#9cff2d"/>
<rect x="349.8" y="455.5" width="14" height="14.3" rx="3" fill="#83ff3e"/>
<rect x="376.8" y="455.5" width="14" height="14.3" rx="3" fill="#5aff5d"/>
<rect x="403.8" y="455.5" width="14" height="14.3" rx="3" fill="#51ff63"/>
<rect x="430.8" y="455.5" width="14" height="14.3" rx="3" fill="#2eff82"/>
<rect x="457.8" y="455.5" width="14" height="14.3" rx="3" fill="#32ff7e"/>
<rect x="484.8" y="455.5" width="14" height="14.3" rx="3" fill="#29ff87"/>
<rect x="511.8" y="455.5" width="14" height="14.3" rx="3" fill="#1eff92"/>
<rect x="538.8" y="455.5" width="14" height="14.3" rx="3" fill="#30ff80"/>
<rect x="565.8" y="455.5" width="14" height="14.3" rx="3" fill="#19ff97"/>
<rect x="592.8" y="455.5" width="14" height="14.3" rx="3" fill="#1dff93"/>
<rect x="619.8" y="455.5" width="14" height="14.3" rx="3" fill="#14ff9c"/>
<rect x="647.5" y="456.2" width="12.5" height="12.8" rx="3" fill="#0bffa5"/>
<rect x="674.5" y="456.2" width="12.5" height="12.8" rx="3" fill="#00ffb5"/>
<rect x="79.8" y="482.8" width="14" height="14.3" rx="3" fill="#42ff6f"/>
<rect x="106.8" y="482.8" width="14" height="14.3" rx="3" fill="#5aff5d"/>
<rect x="133.8" y="482.8" width="14" height="14.3" rx="3" fill="#47ff6b"/>
<rect x="160.8" y="482.8" width="14" height="14.3" rx="3" fill="#92ff33"/>
<rect x="187.8" y="482.8" width="14" height="14.3" rx="3" fill="#54ff61"/>
<rect x="214.8" y="482.8" width="14" height="14.3" rx="3" fill="#59ff5d"/>
<rect x="241.8" y="482.8" width="14" height="14.3" rx="3" fill="#6eff4e"/>
<rect x="268.8" y="482.8" width="14" height="14.3" rx="3" fill="#69ff52"/>
<rect x="295.8" y="482.8" width="14" height="14.3" rx="3" fill="#a2ff29"/>
<rect x="322.8" y="482.8" width="14" height="14.3" rx="3" fill="#6eff4e"/>
<rect x="349.8" y="482.8" width="14" height="14.3" rx="3" fill="#6fff4d"/>
<rect x="376.8" y="482.8" width="14" height="14.3" rx="3" fill="#56ff5f"/>
<rect x="403.8" y="482.8" width="14" height="14.3" rx="3" fill="#54ff61"/>
<rect x="430.8" y="482.8" width="14" height="14.3" rx="3" fill="#3aff76"/>
<rect x="457.8" y="482.8" width="14" height="14.3" rx="3" fill="#34ff7c"/>
<rect x="484.8" y="482.8" width="14" height="14.3" rx="3" fill="#36ff7a"/>
<rect x="511.8" y="482.8" width="14" height="14.3" rx="3" fill="#2aff86"/>
<rect x="538.8" y="482.8" width="14" height="14.3" rx="3" fill="#29ff87"/>
<rect x="565.8" y="482.8" width="14" height="14.3" rx="3" fill="#21ff8f"/>
<rect x="592.8" y="482.8" width="14" height="14.3" rx="3" fill="#29ff87"/>
<rect x="619.8" y="482.8" width="14" height="14.3" rx="3" fill="#13ff9d"/>
<rect x="646.8" y="482.8" width="14" height="14.3" rx="3" fill="#13ff9d"/>
<rect x="674.5" y="483.6" width="12.5" height="12.8" rx="3" fill="#0cffa4"/>
<rect x="79.8" y="510.1" width="14" height="14.3" rx="3" fill="#42ff6e"/>
<rect x="106.8" y="510.1" width="14" height="14.3" rx="3" fill="#60ff59"/>
<rect x="133.8" y="510.1" width="14" height="14.3" rx="3" fill="#60ff58"/>
<rect x="160.8" y="510.1" width="14" height="14.3" rx="3" fill="#50ff64"/>
<rect x="187.8" y="510.1" width="14" height="14.3" rx="3" fill="#4fff64"/>
<rect x="214.8" y="510.1" width="14" height="14.3" rx="3" fill="#5fff59"/>
<rect x="241.8" y="510.1" width="14" height="14.3" rx="3" fill="#56ff60"/>
<rect x="268.8" y="510.1" width="14" height="14.3" rx="3" fill="#60ff58"/>
<rect x="295.8" y="510.1" width="14" height="14.3" rx="3" fill="#87ff3b"/>
<rect x="322.8" y="510.1" width="14" height="14.3" rx="3" fill="#6aff50"/>
<rect x="349.8" y="510.1" width="14" height="14.3" rx="3" fill="#9eff2c"/>
<rect x="376.8" y="510.1" width="14" height="14.3" rx="3" fill="#66ff54"/>
<rect x="403.8" y="510.1" width="14" height="14.3" rx="3" fill="#44ff6d"/>
<rect x="430.8" y="510.1" width="14" height="14.3" rx="3" fill="#40ff70"/>
<rect x="457.8" y="510.1" width="14" height="14.3" rx="3" fill="#38ff78"/>
<rect x="484.8" y="510.1" width="14" height="14.3" rx="3" fill="#28ff88"/>
<rect x="511.8" y="510.1" width="14" height="14.3" rx="3" fill="#35ff7b"/>
<rect x="538.8" y="510.1" width="14" height="14.3" rx="3" fill="#34ff7c"/>
<rect x="565.8" y="510.1" width="14" height="14.3" rx="3" fill="#1bff95"/>
<rect x="592.8" y="510.1" width="14" height="14.3" rx="3" fill="#29ff87"/>
<rect x="620.5" y="510.9" width="12.5" height="12.8" rx="3" fill="#0cffa4"/>
<rect x="647.5" y="510.9" width="12.5" height="12.8" rx="3" fill="#09ffa7"/>
<rect x="673.8" y="510.1" width="14" height="14.3" rx="3" fill="#0dffa3"/>
<rect x="701.5" y="510.9" width="12.5" height="12.8" rx="3" fill="#00ffd9"/>
<rect x="79.8" y="537.4" width="14" height="14.3" rx="3" fill="#37ff79"/>
<rect x="106.8" y="537.4" width="14" height="14.3" rx="3" fill="#4eff66"/>
<rect x="133.8" y="537.4" width="14" height="14.3" rx="3" fill="#55ff60"/>
<rect x="160.8" y="537.4" width="14" height="14.3" rx="3" fill="#57ff5f"/>
<rect x="187.8" y="537.4" width="14" height="14.3" rx="3" fill="#52ff63"/>
<rect x="214.8" y="537.4" width="14" height="14.3" rx="3" fill="#5aff5c"/>
<rect x="241.8" y="537.4" width="14" height="14.3" rx="3" fill="#6cff4f"/>
<rect x="268.8" y="537.4" width="14" height="14.3" rx="3" fill="#58ff5e"/>
<rect x="295.8" y="537.4" width="14" height="14.3" rx="3" fill="#e6ff03"/>
<rect x="322.8" y="537.4" width="14" height="14.3" rx="3" fill="#63ff56"/>
<rect x="349.8" y="537.4" width="14" height="14.3" rx="3" fill="#50ff64"/>
<rect x="376.8" y="537.4" width="14" height="14.3" rx="3" fill="#53ff62"/>
<rect x="403.8" y="537.4" width="14" height="14.3" rx="3" fill="#55ff61"/>
<rect x="430.8" y="537.4" width="14" height="14.3" rx="3" fill="#3aff76"/>
<rect x="457.8" y="537.4" width="14" height="14.3" rx="3" fill="#29ff87"/>
<rect x="484.8" y="537.4" width="14" height="14.3" rx="3" fill="#3dff73"/>
<rect x="511.8" y="537.4" width="14" height="14.3" rx="3" fill="#32ff7e"/>
<rect x="538.8" y="537.4" width="14" height="14.3" rx="3" fill="#34ff7c"/>
<rect x="565.8" y="537.4" width="14" height="14.3" rx="3" fill="#18ff98"/>
<rect x="592.8" y="537.4" width="14" height="14.3" rx="3" fill="#17ff99"/>
<rect x="620.5" y="538.2" width="12.5" height="12.8" rx="3" fill="#02ffae"/>
<rect x="646.8" y="537.4" width="14" height="14.3" rx="3" fill="#11ff9f"/>
<rect x="674.5" y="538.2" width="12.5" height="12.8" rx="3" fill="#00ffb6"/>
<rect x="79.8" y="564.7" width="14" height="14.3" rx="3" fill="#3eff72"/>
<rect x="106.8" y="564.7" width="14" height="14.3" rx="3" fill="#5eff59"/>
<rect x="133.8" y="564.7" width="14" height="14.3" rx="3" fill="#7bff44"/>
<rect x="160.8" y="564.7" width="14" height="14.3" rx="3" fill="#54ff61"/>
<rect x="187.8" y="564.7" width="14" height="14.3" rx="3" fill="#50ff64"/>
<rect x="214.8" y="564.7" width="14" height="14.3" rx="3" fill="#6fff4d"/>
<rect x="241.8" y="564.7" width="14" height="14.3" rx="3" fill="#67ff53"/>
<rect x="268.8" y="564.7" width="14" height="14.3" rx="3" fill="#70ff4d"/>
<rect x="295.8" y="564.7" width="14" height="14.3" rx="3" fill="#ccff11"/>
<rect x="322.8" y="564.7" width="14" height="14.3" rx="3" fill="#89ff3a"/>
<rect x="349.8" y="564.7" width="14" height="14.3" rx="3" fill="#67ff53"/>
<rect x="376.8" y="564.7" width="14" height="14.3" rx="3" fill="#56ff60"/>
<rect x="403.8" y="564.7" width="14" height="14.3" rx="3" fill="#42ff6f"/>
<rect x="430.8" y="564.7" width="14" height="14.3" rx="3" fill="#47ff6b"/>
<rect x="457.8" y="564.7" width="14" height="14.3" rx="3" fill="#37ff79"/>
<rect x="484.8" y="564.7" width="14" height="14.3" rx="3" fill="#39ff77"/>
<rect x="511.8" y="564.7" width="14" height="14.3" rx="3" fill="#20ff90"/>
<rect x="538.8" y="564.7" width="14" height="14.3" rx="3" fill="#31ff7f"/>
<rect x="565.8" y="564.7" width="14" height="14.3" rx="3" fill="#17ff99"/>
<rect x="592.8" y="564.7" width="14" height="14.3" rx="3" fill="#27ff89"/>
<rect x="619.8" y="564.7" width="14" height="14.3" rx="3" fill="#0dffa3"/>
<rect x="647.5" y="565.5" width="12.5" height="12.8" rx="3" fill="#06ffaa"/>
<rect x="674.5" y="565.5" width="12.5" height="12.8" rx="3" fill="#02ffae"/>
<rect x="701.5" y="565.5" width="12.5" height="12.8" rx="3" fill="#00ffd6"/>
<rect x="79.8" y="592.0" width="14" height="14.3" rx="3" fill="#7dff43"/>
<rect x="106.8" y="592.0" width="14" height="14.3" rx="3" fill="#44ff6d"/>
<rect x="133.8" y="592.0" width="14" height="14.3" rx="3" fill="#55ff60"/>
<rect x="160.8" y="592.0" width="14" height="14.3" rx="3" fill="#53ff61"/>
<rect x="187.8" y="592.0" width="14" height="14.3" rx="3" fill="#4fff65"/>
<rect x="214.8" y="592.0" width="14" height="14.3" rx="3" fill="#55ff60"/>
<rect x="241.8" y="592.0" width="14" height="14.3" rx="3" fill="#55ff60"/>
<rect x="268.8" y="592.0" width="14" height="14.3" rx="3" fill="#88ff3b"/>
<rect x="295.8" y="592.0" width="14" height="14.3" rx="3" fill="#abff24"/>
<rect x="322.8" y="592.0" width="14" height="14.3" rx="3" fill="#80ff40"/>
<rect x="349.8" y="592.0" width="14" height="14.3" rx="3" fill="#8cff38"/>
<rect x="376.8" y="592.0" width="14" height="14.3" rx="3" fill="#51ff63"/>
<rect x="403.8" y="592.0" width="14" height="14.3" rx="3" fill="#62ff57"/>
<rect x="430.8" y="592.0" width="14" height="14.3" rx="3" fill="#32ff7e"/>
<rect x="457.8" y="592.0" width="14" height="14.3" rx="3" fill="#30ff80"/>
<rect x="484.8" y="592.0" width="14" height="14.3" rx="3" fill="#25ff8b"/>
<rect x="511.8" y="592.0" width="14" height="14.3" rx="3" fill="#25ff8b"/>
<rect x="538.8" y="592.0" width="14" height="14.3" rx="3" fill="#1bff95"/>
<rect x="565.8" y="592.0" width="14" height="14.3" rx="3" fill="#28ff88"/>
<rect x="592.8" y="592.0" width="14" height="14.3" rx="3" fill="#1fff91"/>
<rect x="620.5" y="592.8" width="12.5" height="12.8" rx="3" fill="#06ffaa"/>
<rect x="647.5" y="592.8" width="12.5" height="12.8" rx="3" fill="#09ffa7"/>
<rect x="674.5" y="592.8" width="12.5" height="12.8" rx="3" fill="#0cffa4"/>
</g>
<g filter="url(#b1)">
<path d="M140 132l8-10l14-5l12-1l4 4l-10 3l-10 8l-12 3z" fill="#00d0ff"/>
<path d="M145 129l6-8l10-3l6 1l-8 5l-6 5z" fill="#90ff40"/>
<rect x="148" y="121" width="10" height="6" fill="#ff9000"/><rect x="150" y="122" width="6" height="4" fill="#f01000"/>
<rect x="362" y="139" width="16" height="3" fill="#0050e8"/><rect x="395" y="136" width="30" height="3" fill="#0060f0"/><rect x="434" y="134" width="22" height="4" fill="#00a0ff"/><rect x="440" y="135" width="9" height="3" fill="#00f0ff"/><rect x="420" y="122" width="40" height="3" fill="#0020c8"/>
<rect x="620" y="117" width="4" height="12" fill="#0060f0" transform="rotate(12 622 123)"/><rect x="629" y="132" width="9" height="6" fill="#00e0c0"/><rect x="631" y="133" width="5" height="4" fill="#60ff60"/><rect x="703" y="132" width="4" height="4" fill="#0070f8"/>
<rect x="216" y="663" width="4" height="4" fill="#60d0ff"/><rect x="430" y="654" width="24" height="3" fill="#0050e8"/><rect x="438" y="654" width="10" height="3" fill="#00c0ff"/>
</g>
</g>
</svg>
</div>
<!-- status bar -->
<div class="a" style="left:4px;top:1147px;width:1593px;height:2px;background:linear-gradient(180deg,#fff 0,#fff 1px,#f6f4ec 1px)"></div>
<div class="a face" style="left:4px;top:1149px;width:1593px;height:18px"></div>
<div class="a" style="left:0;top:1167px;width:1600px;height:3px;background:linear-gradient(180deg,#7588de,#6474d2 50%,#4a4fb8)"></div>
<div class="t tah" style="left:4.500px;top:1152px">Ready</div>
<div class="sunk1" style="left:657px;top:1151px;width:406px;height:16px;border-bottom:0"></div>
<div class="sunk1" style="left:1065px;top:1151px;width:406px;height:16px;border-bottom:0"></div>
<div class="sunk1" style="left:1473px;top:1151px;width:33px;height:16px;border-bottom:0"></div>
<div class="sunk1" style="left:1508px;top:1151px;width:26px;height:16px;border-bottom:0"></div>
<div class="sunk1" style="left:1536px;top:1151px;width:28px;height:16px;border-bottom:0"><div class="t tah" style="left:1px;top:1px">NUM</div></div>
<div class="sunk1" style="left:1566px;top:1151px;width:31px;height:16px;border-bottom:0"></div>
<!-- taskbar -->
<div class="a" style="left:0;top:1170px;width:1600px;height:30px;background:linear-gradient(180deg,#3a80f0 0,#2d6ee8 2px,#245edb 5px,#2258d6 22px,#1f50c8 28px,#1941a5 30px)"></div>
<div class="a" style="left:0;top:1170px;width:97px;height:30px;border-radius:0 10px 10px 0;background:linear-gradient(180deg,#4d9e4d 0,#5eb45e 2px,#3c963c 6px,#358f35 14px,#2f872f 24px,#28762a 30px);box-shadow:1px 0 3px rgba(0,0,40,.5),inset -6px 0 6px -3px rgba(20,70,20,.6)"></div>
<svg class="a" style="left:10px;top:1177px" width="20" height="19" viewBox="0 0 20 19"><path d="M2 3.500c2-1.500 4-1.500 6.500 0l-1.500 5.500c-2.500-1.500-4.500-1.500-6.500 0z" fill="#f0603c"/><path d="M10 3.800c2.500 1.500 4.500 1.500 7 0l-1.500 5.500c-2.500 1.500-4.500 1.500-7 0z" fill="#7cc850"/><path d="M0.200 10.500c2-1.500 4-1.500 6.500 0l-1.500 5.500c-2.500-1.500-4.500-1.500-6.500 0z" fill="#5090f0" transform="translate(0.500 0)"/><path d="M8.200 10.800c2.500 1.500 4.500 1.500 7 0l-1.500 5.500c-2.500 1.500-4.500 1.500-7 0z" fill="#f8d040"/></svg>
<div class="a" style="left:34px;top:1173.500px;font-family:'Liberation Sans',sans-serif;font-style:italic;font-weight:bold;font-size:19px;line-height:24px;color:#fff;letter-spacing:-0.5px;text-shadow:1px 1px 2px rgba(0,0,0,.5)">start</div>
<div class="a" style="left:106px;top:1174px;width:160px;height:23px;border-radius:3px;background:#1e52c8;box-shadow:inset 1px 1px 1px rgba(0,0,40,.45),inset -1px -1px 0 rgba(80,130,240,.5)"></div>
<svg class="a" style="left:117px;top:1178px" width="16" height="16" viewBox="0 0 16 16">
<rect width="16" height="16" fill="#fff"/>
<circle cx="3.500" cy="3" r="3" fill="#a020d0"/><circle cx="2.800" cy="2.200" r="1" fill="#e0a0ff"/>
<circle cx="12" cy="3" r="3" fill="#e01010"/><path d="M10.500 3h3M12 1.500v3" stroke="#fff" stroke-width="1.200"/>
<circle cx="10" cy="8" r="2.600" fill="#2080d0"/><circle cx="9.400" cy="7.300" r="0.900" fill="#a0d8ff"/>
<circle cx="2.500" cy="12" r="2.500" fill="#20b020"/>
<text x="2.500" y="15.800" font-family="Liberation Sans,sans-serif" font-weight="bold" font-size="7" textLength="13.500" lengthAdjust="spacingAndGlyphs" fill="#e00000" stroke="#900000" stroke-width="0.600">FDSS</text>
</svg>
<div class="t tah" style="left:136px;top:1180px;color:#fff">FDSS7000EX/uCELL ...</div>
<!-- tray -->
<div class="a" style="left:1454px;top:1170px;width:146px;height:30px;background:linear-gradient(180deg,#1a5ad0 0,#2a9cf4 2px,#1792ec 5px,#1290e8 20px,#0f80d8 28px,#0a60b8 30px);border-left:1px solid #0a3c9c"></div>
<div class="a" style="left:1444px;top:1176px;width:19px;height:19px;border-radius:50%;background:radial-gradient(circle at 40% 30%,#6ab4fa,#2a7aec 60%,#1558d0);border:1px solid #9ccaf8;box-shadow:0 1px 1px rgba(0,0,60,.5)"></div>
<svg class="a" style="left:1448px;top:1180px" width="11" height="11" viewBox="0 0 11 11"><path d="M7.500 1.500L3.500 5.500L7.500 9.500" stroke="#fff" stroke-width="2.200" fill="none"/></svg>
<svg class="a" style="left:1464px;top:1177px" width="17" height="16" viewBox="0 0 17 16"><rect x="6" y="0.500" width="7" height="6" fill="#303878" stroke="#8088b0"/><rect x="1" y="4.500" width="7" height="6" fill="#303878" stroke="#9098c0"/><path d="M0.500 12.500h8" stroke="#c8d0e8" stroke-width="2.500"/><path d="M7.500 8.500l7 7M14.500 8.500l-7 7" stroke="#e82020" stroke-width="2.200"/></svg>
<svg class="a" style="left:1482px;top:1177px" width="16" height="16" viewBox="0 0 16 16"><rect width="16" height="16" fill="#fff"/><rect width="16" height="1" fill="#000"/><rect y="15" width="16" height="1" fill="#000"/><path d="M1.500 3l3 9.500l3-9.500" stroke="#00a000" stroke-width="2.200" fill="none"/><path d="M10 7.500V3.500h4v4" stroke="#0040e0" stroke-width="1.500" fill="none"/><path d="M14 9h-3.500v4h3.500" stroke="#e00000" stroke-width="1.500" fill="none"/></svg>
<svg class="a" style="left:1500px;top:1177px" width="16" height="16" viewBox="0 0 16 16"><rect x="0.500" y="0.500" width="15" height="15" rx="2" fill="#e02028" stroke="#b01018"/><path d="M3.500 3.500h9v5c0 2.500-2 4-4.500 5c-2.500-1-4.500-2.500-4.500-5z" fill="#fff"/><path d="M8 4v9M4 7.500h8" stroke="#e02028" stroke-width="1.600"/></svg>
<svg class="a" style="left:1518px;top:1177px" width="17" height="16" viewBox="0 0 17 16"><path d="M0.500 1.500l3-1h10l2.500 3v11.500H3l-2.500-2z" fill="#102880" stroke="#8898c8"/><rect x="3.500" y="2.500" width="11" height="10.500" fill="#1858b0" stroke="#b0b8d0" stroke-width="0.800"/><path d="M7 6l3.500 3.500M10.500 6l-3.500 3.500M8.800 5v5.500M6 7.800h5.500" stroke="#78a8e8" stroke-width="0.700"/></svg>
<div class="t tah" style="left:1544px;top:1179px;color:#fff">1:53 PM</div>
</body></html>
